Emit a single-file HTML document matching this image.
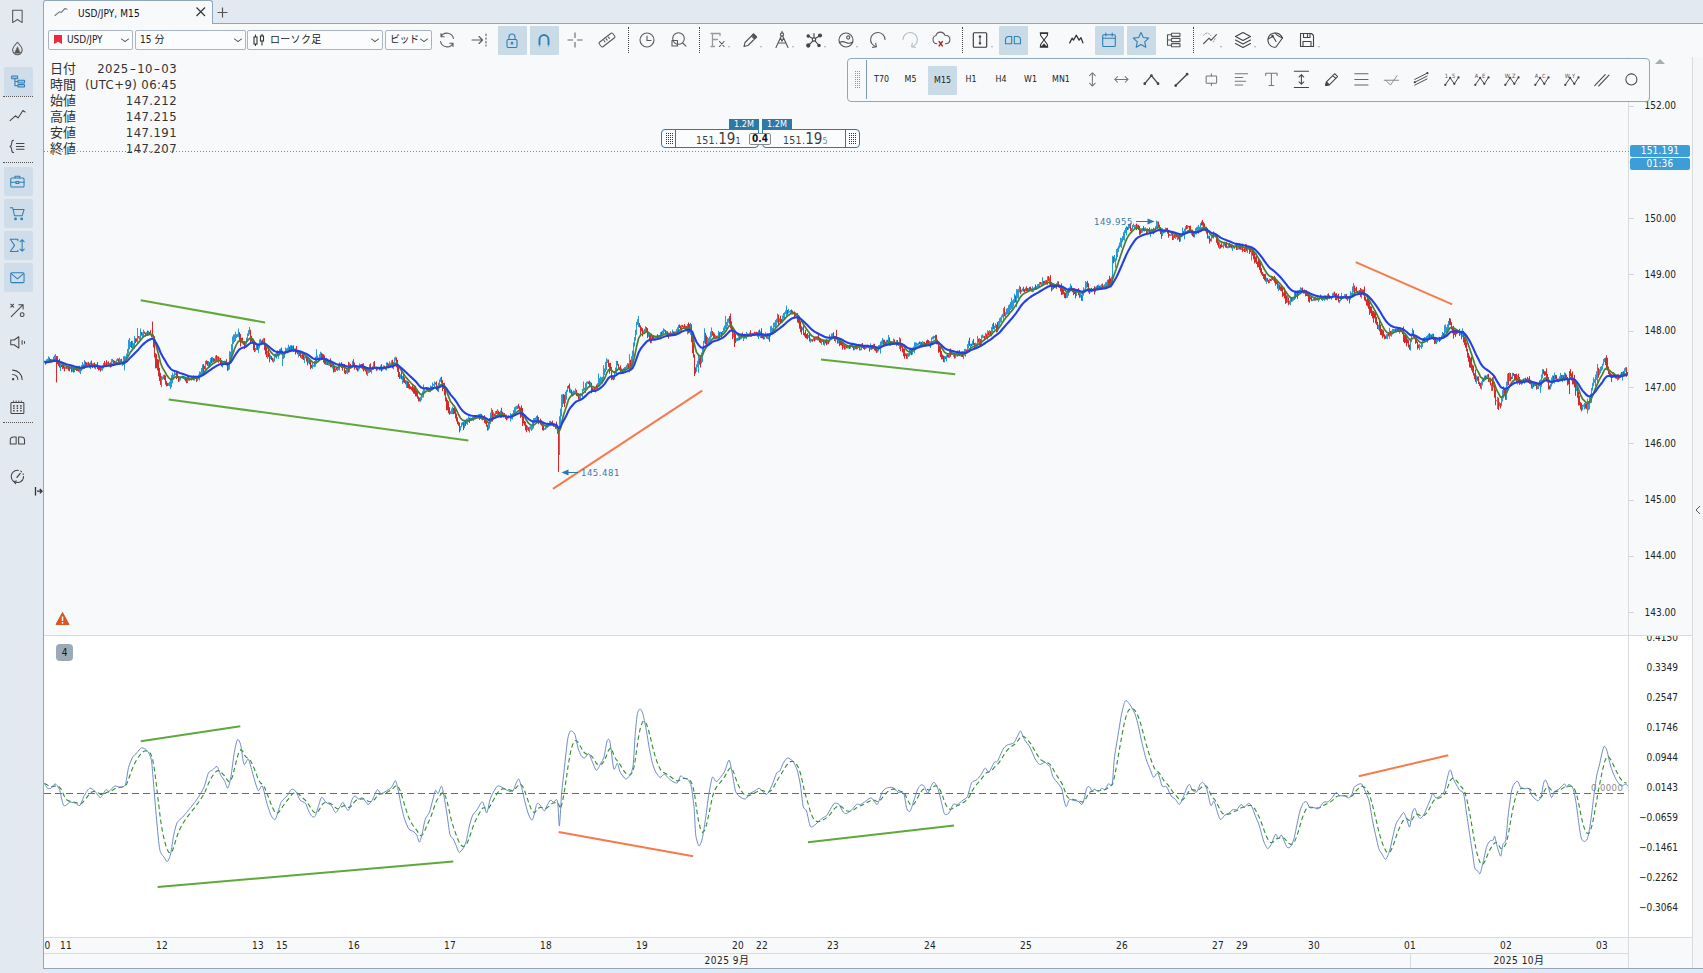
<!DOCTYPE html><html lang="ja"><head><meta charset="utf-8"><title>USD/JPY, M15</title><style>
*{box-sizing:border-box;margin:0;padding:0}
html,body{width:1703px;height:973px;overflow:hidden}
body{position:relative;background:#e3e9f1;font-family:"DejaVu Sans Condensed","Liberation Sans","Noto Sans CJK JP",sans-serif;color:#222;font-size:10px}
.abs{position:absolute}
.panel{position:absolute;left:43px;top:23px;width:1660px;height:946px;background:#f8f9fb;border-left:1px solid #8fa6bb;border-top:1px solid #8fa6bb;border-bottom:1px solid #8fa6bb}
.tab{position:absolute;left:43px;top:0;width:170px;height:25px;background:#f8f9fb;border:1px solid #8fa6bb;border-bottom:none;border-radius:3px 3px 0 0}
.ind{position:absolute;left:44px;top:636px;width:1648px;height:301px;background:#fff}
.hl{position:absolute;height:1px;background:#d9dcdf}
.vl{position:absolute;width:1px;background:#d9dcdf}
.ic{position:absolute;display:block;overflow:visible}
.sb{position:absolute;left:4px;width:29px;height:29px;background:#cedde9;border-radius:2px}
.tb{position:absolute;top:26px;width:29px;height:28.5px;background:#cadbe8;border-radius:1px}
.dsep{position:absolute;left:3px;width:30px;border-top:1px dotted #555}
.vsep{position:absolute;top:27px;height:26px;border-left:1px dotted #444}
.combo{position:absolute;top:30px;height:20px;border:1px solid #a9b4be;border-radius:2px;background:#fbfcfd;font-size:10px;line-height:18px;color:#222}
.combo i{position:absolute;right:4px;top:4.5px;width:6px;height:6px;border-right:1px solid #444;border-bottom:1px solid #444;transform:scaleY(.7) rotate(45deg)}
.ax{position:absolute;left:1644.5px;font-size:10px;letter-spacing:0;color:#222;line-height:12px}
.ax2{position:absolute;right:39px;font-size:10px;letter-spacing:0;color:#222;line-height:12px;text-align:right}
.tk{position:absolute;left:1629px;width:5px;height:1px;background:#d0d4d8}
.dl{position:absolute;top:938.5px;font-size:10px;letter-spacing:.2px;color:#222;line-height:14px;transform:translateX(-50%)}
.info{position:absolute;left:50px;width:127px;font-size:13px;line-height:16px;color:#333;height:16px}
.info b{font-weight:normal;position:absolute;right:0;top:0;letter-spacing:.4px}.info b u{text-decoration:none;display:inline-block;width:8.5px;text-align:center;transform:scaleX(1.5)}
.badge{position:absolute;left:1630px;width:60px;height:12px;background:#3d9dd6;border-radius:2px;color:#fff;font-size:10px;letter-spacing:.2px;line-height:12px;text-align:center;z-index:3}
.ft{position:absolute;left:847px;top:58px;width:803px;height:44px;border:1px solid #8fa6bb;border-radius:4px;background:#f8f9fb}
.ftb{position:absolute;top:73px;font-size:8.8px;letter-spacing:0;color:#222;line-height:12px;transform:translateX(-50%)}
svg.chart{position:absolute;left:0;top:0}
.dd{position:absolute;width:0;height:0;border-left:1.7px solid transparent;border-right:1.7px solid transparent;border-top:2px solid #8fb3cf}
</style></head><body>
<div class="tab"></div>
<div class="panel"></div>
<div class="abs" style="left:44px;top:23px;width:168px;height:2px;background:#f8f9fb"></div>
<svg class="ic" style="left:50px;top:4px" width="22" height="16" viewBox="50 4 22 16" fill="none" stroke="#777" stroke-width="1.1" stroke-linejoin="round" stroke-linecap="round"><path d="M55 15.500L59.400 11.800L61.300 12.400L65 8.500L67 9.300"/></svg>
<div class="abs" style="left:78px;top:7px;font-size:10px;letter-spacing:.1px;line-height:13px;color:#111">USD/JPY, M15</div>
<svg class="ic" style="left:195px;top:6px" width="12" height="12" viewBox="0 0 12 12" stroke="#333" stroke-width="1.200" fill="none"><path d="M1.500 1.500l8.500 8.500M10 1.500l-8.500 8.500"/></svg>
<svg class="ic" style="left:216px;top:6px" width="13" height="13" viewBox="0 0 13 13" stroke="#555" stroke-width="1.200" fill="none"><path d="M6.500 1.500v10M1.500 6.500h10"/></svg>
<div class="sb" style="top:67px"></div>
<div class="sb" style="top:167px"></div>
<div class="sb" style="top:199px"></div>
<div class="sb" style="top:231px"></div>
<div class="sb" style="top:263px"></div>
<div class="dsep" style="top:96px"></div>
<div class="dsep" style="top:162px"></div>
<div class="dsep" style="top:422px"></div>
<svg class="ic" style="left:5.9px;top:5.1px;color:#555;width:22.8px;height:22.8px" width="24" height="24" viewBox="0 0 24 24" fill="none" stroke="currentColor" stroke-width="1.1" stroke-linecap="round" stroke-linejoin="round"><path d="M7 5.5h10v13l-5-3.2-5 3.2z"/></svg>
<svg class="ic" style="left:5.9px;top:37.1px;color:#555;width:22.8px;height:22.8px" width="24" height="24" viewBox="0 0 24 24" fill="none" stroke="currentColor" stroke-width="1.1" stroke-linecap="round" stroke-linejoin="round"><path d="M12 5.5c-2 2.3-5 5-5 8.2a5 5 0 0 0 10 0c0-3.200-3-5.900-5-8.200z"/><path d="M12 10.500l-3 6.500h6z" fill="currentColor" stroke-width=".6"/></svg>
<svg class="ic" style="left:5.9px;top:69.6px;color:#2f7fb5;width:22.8px;height:22.8px" width="24" height="24" viewBox="0 0 24 24" fill="none" stroke="currentColor" stroke-width="1.1" stroke-linecap="round" stroke-linejoin="round"><rect x="5.900" y="6.300" width="6.400" height="2.900" rx=".5" fill="#9cc3de"/><rect x="12.500" y="10.700" width="7" height="3" rx=".5" fill="#9cc3de"/><rect x="12.500" y="15.200" width="7" height="2.800" rx=".5" fill="#9cc3de"/><path d="M9.400 9.200v7.400h3.100M9.400 12.200h3.100"/></svg>
<svg class="ic" style="left:5.9px;top:103.6px;color:#444;width:22.8px;height:22.8px" width="24" height="24" viewBox="0 0 24 24" fill="none" stroke="currentColor" stroke-width="1.1" stroke-linecap="round" stroke-linejoin="round"><path d="M4.300 17.600L9.900 12.400L12.700 14.700L17.800 6.800L20.300 8.500"/></svg>
<svg class="ic" style="left:5.9px;top:134.6px;color:#444;width:22.8px;height:22.8px" width="24" height="24" viewBox="0 0 24 24" fill="none" stroke="currentColor" stroke-width="1.1" stroke-linecap="round" stroke-linejoin="round"><path d="M8 5.500c-2 0-2 1.500-2 3s0 3-1.800 3.500c1.800.5 1.800 2 1.800 3.500s0 3 2 3M11 9h8M11 12h8M11 15h8"/></svg>
<svg class="ic" style="left:5.9px;top:169.6px;color:#2f7fb5;width:22.8px;height:22.8px" width="24" height="24" viewBox="0 0 24 24" fill="none" stroke="currentColor" stroke-width="1.1" stroke-linecap="round" stroke-linejoin="round"><rect x="5" y="8.500" width="14" height="9.500" rx="1.200"/><path d="M9.500 8.500v-2h5v2M5 13h5.500M13.500 13h5.500"/><rect x="10.500" y="12" width="3" height="2.200"/></svg>
<svg class="ic" style="left:5.9px;top:202.1px;color:#2f7fb5;width:22.8px;height:22.8px" width="24" height="24" viewBox="0 0 24 24" fill="none" stroke="currentColor" stroke-width="1.1" stroke-linecap="round" stroke-linejoin="round"><path d="M4.500 6h2.500l2 8.500h8l2-6.500h-11"/><circle cx="10" cy="17.800" r=".9" fill="currentColor"/><circle cx="16.500" cy="17.800" r=".9" fill="currentColor"/></svg>
<svg class="ic" style="left:5.9px;top:234.1px;color:#2f7fb5;width:22.8px;height:22.8px" width="24" height="24" viewBox="0 0 24 24" fill="none" stroke="currentColor" stroke-width="1.1" stroke-linecap="round" stroke-linejoin="round"><path d="M12.500 7v-1.500h-8l4.500 6.500-4.500 6.500h8v-1.500M17 6v12M14.800 8.200l2.200-2.200 2.200 2.200M14.800 15.800l2.200 2.200 2.200-2.200"/></svg>
<svg class="ic" style="left:5.9px;top:265.6px;color:#2f7fb5;width:22.8px;height:22.8px" width="24" height="24" viewBox="0 0 24 24" fill="none" stroke="currentColor" stroke-width="1.1" stroke-linecap="round" stroke-linejoin="round"><rect x="5" y="7" width="14" height="10.500" rx="1.200"/><path d="M5.500 8l6.500 5.500 6.500-5.500"/></svg>
<svg class="ic" style="left:5.9px;top:298.6px;color:#444;width:22.8px;height:22.8px" width="24" height="24" viewBox="0 0 24 24" fill="none" stroke="currentColor" stroke-width="1.1" stroke-linecap="round" stroke-linejoin="round"><path d="M5.500 18.500l12.500-12.500M13.500 6h4.500v4.500M5 5.500l3 3M8 5.500l-3 3"/><circle cx="17" cy="16.500" r="2"/></svg>
<svg class="ic" style="left:5.9px;top:331.1px;color:#444;width:22.8px;height:22.8px" width="24" height="24" viewBox="0 0 24 24" fill="none" stroke="currentColor" stroke-width="1.1" stroke-linecap="round" stroke-linejoin="round"><path d="M5 9.500h3.500l5-3.500v12l-5-3.500h-3.500zM17 10v4M19.500 11.200v1.600"/></svg>
<svg class="ic" style="left:5.9px;top:363.1px;color:#444;width:22.8px;height:22.8px" width="24" height="24" viewBox="0 0 24 24" fill="none" stroke="currentColor" stroke-width="1.1" stroke-linecap="round" stroke-linejoin="round"><path d="M7 7.500a10 10 0 0 1 10 10M7 12a5.500 5.500 0 0 1 5.500 5.500"/><circle cx="7.500" cy="17" r=".7" fill="currentColor"/></svg>
<svg class="ic" style="left:5.9px;top:395.6px;color:#444;width:22.8px;height:22.8px" width="24" height="24" viewBox="0 0 24 24" fill="none" stroke="currentColor" stroke-width="1.1" stroke-linecap="round" stroke-linejoin="round"><rect x="5.200" y="6.800" width="13.600" height="11.700" rx=".8"/><path d="M8 5.200v1.600M10.700 5.200v1.600M13.400 5.200v1.600M16.100 5.200v1.600" stroke-width=".9"/><path d="M8.300 9.600v7M12 9.600v7M15.700 9.600v7" stroke-width="1.500" stroke-dasharray="1.600 1" stroke-linecap="butt"/></svg>
<svg class="ic" style="left:5.9px;top:429.1px;color:#444;width:22.8px;height:22.8px" width="24" height="24" viewBox="0 0 24 24" fill="none" stroke="currentColor" stroke-width="1.1" stroke-linecap="round" stroke-linejoin="round"><path d="M4.500 15.800v-4q0-3.300 3.300-3.300h2.900v7.300zM13.300 8.500h2.900q3.300 0 3.300 3.300v4h-6.200z"/></svg>
<svg class="ic" style="left:5.9px;top:464.6px;color:#444;width:22.8px;height:22.8px" width="24" height="24" viewBox="0 0 24 24" fill="none" stroke="currentColor" stroke-width="1.1" stroke-linecap="round" stroke-linejoin="round"><path d="M12 5.500a6.500 6.500 0 1 0 6.500 6.500"/><path d="M12 5.500a6.500 6.500 0 0 1 6.500 6.500a6.500 6.500 0 0 1 -3 5.500" stroke-dasharray="1.600 1.800" stroke-linecap="butt"/><path d="M11.500 13l3.300-4" stroke-width="1.400"/><path d="M8.300 17.300l1.800 2.500M8.300 17.300l2.800-.5"/></svg>
<svg class="ic" style="left:33px;top:486px" width="10" height="10" viewBox="0 0 10 10" stroke="#333" stroke-width="1.300" fill="none"><path d="M2.500 1v8.500M4 5.200h5M6.800 3l2.200 2.200-2.200 2.200"/></svg>
<div class="combo" style="left:48px;width:85px"><span class="abs" style="left:5px;top:4px;width:8px;height:9px;background:#f0283c;clip-path:polygon(0 0,100% 0,100% 100%,50% 75%,0 100%)"></span><span class="abs" style="left:18px;top:0;letter-spacing:0">USD/JPY</span><i></i></div>
<div class="combo" style="left:135px;width:111px"><span class="abs" style="left:4px;top:0;letter-spacing:.1px">15 分</span><i></i></div>
<div class="combo" style="left:247px;width:136px"><svg class="ic" style="left:4px;top:2px" width="14" height="14" viewBox="0 0 14 14" fill="none" stroke="#333" stroke-width="1.100"><rect x="2" y="4" width="3" height="7"/><path d="M3.500 1.500v2.500M3.500 11v2"/><rect x="8.500" y="3" width="3" height="5"/><path d="M10 1v2M10 8v4.500"/></svg><span class="abs" style="left:22px;top:0;letter-spacing:.3px">ローソク足</span><i></i></div>
<div class="combo" style="left:385px;width:47px"><span class="abs" style="left:4px;top:0;letter-spacing:-.4px">ビッド</span><i></i></div>
<div class="tb" style="left:498px"></div>
<div class="tb" style="left:530px"></div>
<div class="tb" style="left:999px"></div>
<div class="tb" style="left:1095px"></div>
<div class="tb" style="left:1127px"></div>
<div class="vsep" style="left:628px"></div>
<div class="vsep" style="left:699px"></div>
<div class="vsep" style="left:962px"></div>
<div class="vsep" style="left:1193px"></div>
<svg class="ic" style="left:435.0px;top:28.0px;color:#5a5a5a;width:24.0px;height:24.0px" width="24" height="24" viewBox="0 0 24 24" fill="none" stroke="currentColor" stroke-width="1.1" stroke-linecap="round" stroke-linejoin="round"><path d="M18.500 10.500a6.800 6.800 0 0 0-12.500-2M5.500 13.500a6.800 6.800 0 0 0 12.500 2M6 5.500v3.200h3.200M18 18.500v-3.200h-3.200"/></svg>
<svg class="ic" style="left:467.0px;top:28.0px;color:#5a5a5a;width:24.0px;height:24.0px" width="24" height="24" viewBox="0 0 24 24" fill="none" stroke="currentColor" stroke-width="1.1" stroke-linecap="round" stroke-linejoin="round"><path d="M5 12h10.500M12 8.500l3.500 3.500-3.500 3.500"/><path d="M19 6v12" stroke-dasharray="1.500 2.200"/></svg>
<svg class="ic" style="left:500.0px;top:28.0px;color:#2f7fb5;width:24.0px;height:24.0px" width="24" height="24" viewBox="0 0 24 24" fill="none" stroke="currentColor" stroke-width="1.1" stroke-linecap="round" stroke-linejoin="round"><rect x="7" y="11.500" width="10" height="8" rx="1.200"/><path d="M9 11.500v-2.500a3 3 0 0 1 6 0v2.500"/><circle cx="12" cy="15.300" r=".9"/></svg>
<svg class="ic" style="left:532.0px;top:28.0px;color:#2f7fb5;width:24.0px;height:24.0px" width="24" height="24" viewBox="0 0 24 24" fill="none" stroke="currentColor" stroke-width="1.1" stroke-linecap="round" stroke-linejoin="round"><path d="M7.500 17v-5.500a4.500 4.500 0 0 1 9 0v5.500" stroke-width="1.900" stroke-linecap="butt"/><path d="M7.500 17.500v2M16.500 17.500v2" stroke-dasharray="1 1" stroke-linecap="butt"/></svg>
<svg class="ic" style="left:563.0px;top:28.0px;color:#5a5a5a;width:24.0px;height:24.0px" width="24" height="24" viewBox="0 0 24 24" fill="none" stroke="currentColor" stroke-width="1.1" stroke-linecap="round" stroke-linejoin="round"><path d="M12 4.500v5.500M12 14v5.500M4.500 12h5.500M14 12h5.500" stroke="#9a9a9a" stroke-width="1.700" stroke-linecap="butt"/></svg>
<svg class="ic" style="left:595.0px;top:28.0px;color:#5a5a5a;width:24.0px;height:24.0px" width="24" height="24" viewBox="0 0 24 24" fill="none" stroke="currentColor" stroke-width="1.1" stroke-linecap="round" stroke-linejoin="round"><rect x="3.500" y="9.200" width="17" height="5.600" rx="1.200" transform="rotate(-38 12 12)"/><path d="M9 12.500l1 1.300M11.200 10.800l1 1.300M13.400 9.100l1 1.300" /></svg>
<svg class="ic" style="left:634.5px;top:28.0px;color:#5a5a5a;width:24.0px;height:24.0px" width="24" height="24" viewBox="0 0 24 24" fill="none" stroke="currentColor" stroke-width="1.1" stroke-linecap="round" stroke-linejoin="round"><circle cx="12" cy="12" r="7"/><path d="M12 8v4.500h4"/></svg>
<svg class="ic" style="left:666.0px;top:28.0px;color:#5a5a5a;width:24.0px;height:24.0px" width="24" height="24" viewBox="0 0 24 24" fill="none" stroke="currentColor" stroke-width="1.1" stroke-linecap="round" stroke-linejoin="round"><circle cx="12.500" cy="10.500" r="5.800"/><path d="M16.800 15l3.200 3.200M6 12.500h5.500v5.500h-5.500z"/></svg>
<svg class="ic" style="left:705.5px;top:28.0px;color:#777;width:24.0px;height:24.0px" width="24" height="24" viewBox="0 0 24 24" fill="none" stroke="currentColor" stroke-width="1.1" stroke-linecap="round" stroke-linejoin="round"><path d="M6.500 18.500v-13h7.500v2M6.500 11.500h5M5 18.500h3.500M5 5.500h2" stroke="#9a9a9a" stroke-width="1.300"/><path d="M13.500 13.500l4.500 5M18 13.500l-4.500 5" stroke="#555"/></svg>
<div class="dd" style="left:728.1px;top:45.5px"></div>
<svg class="ic" style="left:737.5px;top:28.0px;color:#555;width:24.0px;height:24.0px" width="24" height="24" viewBox="0 0 24 24" fill="none" stroke="currentColor" stroke-width="1.1" stroke-linecap="round" stroke-linejoin="round"><path d="M6 18.500l1-4 8.500-8.500 3 3-8.500 8.500zM13.500 8l3 3"/><path d="M14.200 7.300l1.300-1.300 3 3-1.300 1.300z" fill="currentColor"/></svg>
<div class="dd" style="left:760.1px;top:45.5px"></div>
<svg class="ic" style="left:769.5px;top:28.0px;color:#555;width:24.0px;height:24.0px" width="24" height="24" viewBox="0 0 24 24" fill="none" stroke="currentColor" stroke-width="1.1" stroke-linecap="round" stroke-linejoin="round"><circle cx="12" cy="6.500" r="1.600"/><path d="M11.300 8l-5.300 11.500M12.700 8l5.300 11.500M8.200 15h7.600M12 3.300v1.600M10.400 9.800l1.600 3.400 1.600-3.400"/></svg>
<div class="dd" style="left:792.1px;top:45.5px"></div>
<svg class="ic" style="left:801.5px;top:28.0px;color:#444;width:24.0px;height:24.0px" width="24" height="24" viewBox="0 0 24 24" fill="none" stroke="currentColor" stroke-width="1.1" stroke-linecap="round" stroke-linejoin="round"><circle cx="12" cy="11.500" r="1.700"/><path d="M12 9.800v-4.300M10.700 10.500l-4-2.300M13.300 10.500l4-2.500M10.900 12.800l-4 4.200M13.100 12.800l3.500 4.200"/><circle cx="6.200" cy="8" r="1.200" fill="currentColor"/><circle cx="18" cy="7.500" r="1.500" fill="currentColor"/><circle cx="6.300" cy="17.500" r="1.600" fill="currentColor"/><circle cx="17" cy="17.500" r="1.200" fill="currentColor"/></svg>
<div class="dd" style="left:824.1px;top:45.5px"></div>
<svg class="ic" style="left:833.5px;top:28.0px;color:#555;width:24.0px;height:24.0px" width="24" height="24" viewBox="0 0 24 24" fill="none" stroke="currentColor" stroke-width="1.1" stroke-linecap="round" stroke-linejoin="round"><circle cx="12" cy="12" r="7"/><circle cx="14.200" cy="9.500" r="1.600"/><path d="M5.300 14.600c2.500-1.600 4.500-1.200 6.500-.2s4.500 1.200 7-.4"/></svg>
<div class="dd" style="left:856.1px;top:45.5px"></div>
<svg class="ic" style="left:865.5px;top:28.0px;color:#5a5a5a;width:24.0px;height:24.0px" width="24" height="24" viewBox="0 0 24 24" fill="none" stroke="currentColor" stroke-width="1.1" stroke-linecap="round" stroke-linejoin="round"><path d="M19 11.500A7.200 7.200 0 1 0 10.300 18.700"/><path d="M6.600 19.400l3.700-.7-.6-3.500"/></svg>
<svg class="ic" style="left:897.5px;top:28.0px;color:#b3bec4;width:24.0px;height:24.0px" width="24" height="24" viewBox="0 0 24 24" fill="none" stroke="currentColor" stroke-width="1.1" stroke-linecap="round" stroke-linejoin="round"><path d="M5 11.500A7.200 7.200 0 1 1 13.700 18.700"/><path d="M17.400 19.400l-3.700-.7.600-3.500"/></svg>
<svg class="ic" style="left:929.0px;top:28.0px;color:#5a5a5a;width:24.0px;height:24.0px" width="24" height="24" viewBox="0 0 24 24" fill="none" stroke="currentColor" stroke-width="1.1" stroke-linecap="round" stroke-linejoin="round"><path d="M8 15.800C5.500 15.800 4 14 4 11.800C4 9.500 5.500 8 6.800 7.800C7.500 5.500 9.300 4.100 11.500 4.100C13.500 4.100 15.200 5.300 16 7.300C18.800 7.300 20.900 9 20.900 11.600C20.900 14 19 15.800 16.400 15.800"/><path d="M10 13.500l3.400 4.500M13.400 13.500l-3.400 4.500" stroke="#b02020" stroke-width="1.250"/></svg>
<svg class="ic" style="left:968.0px;top:28.0px;color:#333;width:24.0px;height:24.0px" width="24" height="24" viewBox="0 0 24 24" fill="none" stroke="currentColor" stroke-width="1.1" stroke-linecap="round" stroke-linejoin="round"><rect x="5.300" y="4.800" width="13.400" height="14.400" rx="1"/><path d="M12 8.500v7" stroke-width=".9"/><path d="M12 7.300l1 1.300-1 1.300-1-1.300zM12 14.100l1 1.300-1 1.300-1-1.300z" fill="currentColor" stroke-width=".4"/></svg>
<div class="dd" style="left:990.6px;top:45.5px"></div>
<svg class="ic" style="left:1001.0px;top:28.0px;color:#2f7fb5;width:24.0px;height:24.0px" width="24" height="24" viewBox="0 0 24 24" fill="none" stroke="currentColor" stroke-width="1.1" stroke-linecap="round" stroke-linejoin="round"><path d="M4.500 15.800v-4q0-3.300 3.300-3.300h2.900v7.300zM13.300 8.500h2.900q3.300 0 3.300 3.300v4h-6.200z"/></svg>
<svg class="ic" style="left:1031.5px;top:28.0px;color:#333;width:24.0px;height:24.0px" width="24" height="24" viewBox="0 0 24 24" fill="none" stroke="currentColor" stroke-width="1.1" stroke-linecap="round" stroke-linejoin="round"><path d="M7.800 5.200h8.400M7.800 18.800h8.400" stroke-width="1.700" stroke-linecap="butt"/><path d="M8.600 5.500v2l3.400 4.500 3.400-4.500v-2M8.600 18.500v-2l3.400-4.500 3.400 4.500v2"/><path d="M9.500 18.300l2.500-2.600 2.500 2.600z" fill="currentColor" stroke-width=".5"/></svg>
<svg class="ic" style="left:1064.0px;top:28.0px;color:#333;width:24.0px;height:24.0px" width="24" height="24" viewBox="0 0 24 24" fill="none" stroke="currentColor" stroke-width="1.1" stroke-linecap="round" stroke-linejoin="round"><path d="M5.700 14.900L8.100 10.200L9.500 12.100L12.300 7.200L15.100 12.100L17 9.700L18.900 14.900" stroke-width="1.300"/></svg>
<svg class="ic" style="left:1097.0px;top:28.0px;color:#2f7fb5;width:24.0px;height:24.0px" width="24" height="24" viewBox="0 0 24 24" fill="none" stroke="currentColor" stroke-width="1.1" stroke-linecap="round" stroke-linejoin="round"><rect x="5.700" y="6.800" width="12.600" height="11.700" rx="1"/><path d="M5.700 10.300h12.600M8.800 5v3M15.200 5v3"/></svg>
<svg class="ic" style="left:1129.0px;top:28.0px;color:#2f7fb5;width:24.0px;height:24.0px" width="24" height="24" viewBox="0 0 24 24" fill="none" stroke="currentColor" stroke-width="1.1" stroke-linecap="round" stroke-linejoin="round"><path d="M12 4.500l2.300 5 5.400.6-4 3.700 1.100 5.400-4.800-2.800-4.800 2.800 1.100-5.400-4-3.700 5.400-.6z"/></svg>
<svg class="ic" style="left:1161.5px;top:28.0px;color:#555;width:24.0px;height:24.0px" width="24" height="24" viewBox="0 0 24 24" fill="none" stroke="currentColor" stroke-width="1.1" stroke-linecap="round" stroke-linejoin="round"><rect x="9.500" y="5.200" width="8.500" height="3.200" rx=".4"/><rect x="9.500" y="10.400" width="8.500" height="3.200" rx=".4"/><rect x="9.500" y="15.600" width="8.500" height="3.200" rx=".4"/><path d="M9.500 6.800h-4v10.400h4M5.500 12h4"/></svg>
<svg class="ic" style="left:1197.5px;top:28.0px;color:#555;width:24.0px;height:24.0px" width="24" height="24" viewBox="0 0 24 24" fill="none" stroke="currentColor" stroke-width="1.1" stroke-linecap="round" stroke-linejoin="round"><path d="M5.700 15.500L11.100 10.100L13 12.300L18.400 6.700" stroke-width="1.200"/><path d="M5.700 7.300Q8.700 2.500 13.600 8.300M15.400 14L17.600 9.500" stroke="#999" stroke-dasharray="1.300 1.300" stroke-width=".9"/></svg>
<div class="dd" style="left:1220.1px;top:45.5px"></div>
<svg class="ic" style="left:1231.0px;top:28.0px;color:#444;width:24.0px;height:24.0px" width="24" height="24" viewBox="0 0 24 24" fill="none" stroke="currentColor" stroke-width="1.1" stroke-linecap="round" stroke-linejoin="round"><path d="M12 4.500l7.500 4-7.500 4-7.500-4zM4.500 12l7.500 4 7.500-4M4.500 15.500l7.500 4 7.500-4"/></svg>
<div class="dd" style="left:1253.6px;top:45.5px"></div>
<svg class="ic" style="left:1263.0px;top:28.0px;color:#444;width:24.0px;height:24.0px" width="24" height="24" viewBox="0 0 24 24" fill="none" stroke="currentColor" stroke-width="1.1" stroke-linecap="round" stroke-linejoin="round"><path d="M5 13a7 7 0 0 1 7-8c3 0 6 1.500 7.500 5l-6.500 9c-4 1-7.500-2-8-6z"/><path d="M12 5c2 3 5 4 7.500 5M5 11l5-2.500 3 5"/><circle cx="9.500" cy="8" r=".7" fill="currentColor"/></svg>
<svg class="ic" style="left:1295.0px;top:28.0px;color:#444;width:24.0px;height:24.0px" width="24" height="24" viewBox="0 0 24 24" fill="none" stroke="currentColor" stroke-width="1.1" stroke-linecap="round" stroke-linejoin="round"><path d="M5.500 5.500h11l2 2v11h-13z"/><rect x="8.500" y="5.500" width="6.500" height="4"/><rect x="8" y="13.500" width="8" height="5"/><path d="M12.500 6.500v2" /></svg>
<div class="dd" style="left:1317.6px;top:45.5px"></div>
<div class="info" style="top:60.5px">日付<b>2025<u>-</u>10<u>-</u>03</b></div>
<div class="info" style="top:76.5px">時間<b>(UTC+9) 06:45</b></div>
<div class="info" style="top:92.5px">始値<b>147.212</b></div>
<div class="info" style="top:108.5px">高値<b>147.215</b></div>
<div class="info" style="top:124.5px">安値<b>147.191</b></div>
<div class="info" style="top:140.5px">終値<b>147.207</b></div>
<div class="ind"></div>
<div class="abs" style="left:44px;top:938px;width:1648px;height:30px;background:#f8f9fb"></div>
<div class="hl" style="left:44px;top:635px;width:1648px"></div>
<div class="hl" style="left:44px;top:937px;width:1648px"></div>
<div class="hl" style="left:44px;top:953px;width:1585px"></div>
<div class="vl" style="left:1628px;top:57px;height:911px"></div>
<div class="vl" style="left:1692px;top:57px;height:911px"></div>
<div class="vl" style="left:1410px;top:954px;height:14px"></div>
<div class="abs" style="left:1693px;top:57px;width:10px;height:911px;background:#f5f6f8"></div>
<svg class="ic" style="left:1694px;top:505px" width="8" height="10" viewBox="0 0 8 10" stroke="#555" stroke-width="1" fill="none"><path d="M6 1l-4 4 4 4"/></svg>
<div class="abs" style="left:1655px;top:59px;width:0;height:0;border-left:5px solid transparent;border-right:5px solid transparent;border-bottom:5px solid #a3aeb0"></div>
<div class="abs" style="left:44px;top:151px;width:1585px;height:1px;background:repeating-linear-gradient(90deg,#45a0d8 0,#45a0d8 1px,transparent 1px,transparent 3px)"></div>
<div class="badge" style="top:145px">151.191</div><div class="badge" style="top:158px">01:36</div>
<div class="tk" style="top:106px"></div>
<div class="ax" style="top:100.2px">152.00</div>
<div class="tk" style="top:162px"></div>
<div class="tk" style="top:218px"></div>
<div class="ax" style="top:212.8px">150.00</div>
<div class="tk" style="top:274px"></div>
<div class="ax" style="top:269.0px">149.00</div>
<div class="tk" style="top:331px"></div>
<div class="ax" style="top:325.2px">148.00</div>
<div class="tk" style="top:387px"></div>
<div class="ax" style="top:381.5px">147.00</div>
<div class="tk" style="top:443px"></div>
<div class="ax" style="top:437.8px">146.00</div>
<div class="tk" style="top:500px"></div>
<div class="ax" style="top:494.0px">145.00</div>
<div class="tk" style="top:556px"></div>
<div class="ax" style="top:550.2px">144.00</div>
<div class="tk" style="top:612px"></div>
<div class="ax" style="top:606.5px">143.00</div>
<div class="abs" style="left:1629px;top:636px;width:63px;height:301px;overflow:hidden">
<div class="ax2" style="right:14px;top:-4.5px">0.4150</div>
<div class="ax2" style="right:14px;top:25.5px">0.3349</div>
<div class="ax2" style="right:14px;top:55.6px">0.2547</div>
<div class="ax2" style="right:14px;top:85.6px">0.1746</div>
<div class="ax2" style="right:14px;top:115.7px">0.0944</div>
<div class="ax2" style="right:14px;top:145.8px">0.0143</div>
<div class="ax2" style="right:14px;top:175.8px">−0.0659</div>
<div class="ax2" style="right:14px;top:205.9px">−0.1461</div>
<div class="ax2" style="right:14px;top:235.9px">−0.2262</div>
<div class="ax2" style="right:14px;top:266.0px">−0.3064</div>
</div>
<div class="abs" style="left:1591px;top:782px;font-size:9.500px;letter-spacing:.4px;line-height:12px;color:#8a8a8a">0.0000</div>
<div class="dl" style="left:47.500px">0</div>
<div class="dl" style="left:66px">11</div>
<div class="dl" style="left:162px">12</div>
<div class="dl" style="left:258px">13</div>
<div class="dl" style="left:282px">15</div>
<div class="dl" style="left:354px">16</div>
<div class="dl" style="left:450px">17</div>
<div class="dl" style="left:546px">18</div>
<div class="dl" style="left:642px">19</div>
<div class="dl" style="left:738px">20</div>
<div class="dl" style="left:762px">22</div>
<div class="dl" style="left:833px">23</div>
<div class="dl" style="left:930px">24</div>
<div class="dl" style="left:1026px">25</div>
<div class="dl" style="left:1122px">26</div>
<div class="dl" style="left:1218px">27</div>
<div class="dl" style="left:1242px">29</div>
<div class="dl" style="left:1314px">30</div>
<div class="dl" style="left:1410px">01</div>
<div class="dl" style="left:1506px">02</div>
<div class="dl" style="left:1602px">03</div>
<div class="dl" style="left:727px;top:953.5px;letter-spacing:.5px">2025 9月</div>
<div class="dl" style="left:1519px;top:953.5px;letter-spacing:.5px">2025 10月</div>
<svg class="chart" width="1703" height="973" viewBox="0 0 1703 973">
<defs><clipPath id="cm"><rect x="44" y="57" width="1584" height="578"/></clipPath><clipPath id="ci"><rect x="44" y="636" width="1584" height="301"/></clipPath></defs>
<g clip-path="url(#cm)" fill="none">
<path d="M44.5 360.7V362.5M46.5 359.3V363.7M47.5 358.8V361.9M48.5 356.3V363.2M51.5 358.9V362.6M53.5 356.7V360.8M54.5 355.2V362.1M55.5 354V361M60.5 364V371M65.5 367.1V368.7M67.5 366.4V369.2M70.5 366.8V369.2M72.5 367.3V371.8M74.5 367V372.3M79.5 365.7V372.7M80.5 367.1V374.1M81.5 365.1V371.2M82.5 362.2V367.8M84.5 360V368.9M87.5 362.5V366.5M90.5 361.7V369.2M93.5 363V366.1M95.5 363.9V369.3M96.5 363.9V366.7M101.5 366.2V370.5M102.5 365.8V370.6M103.5 362.9V368.5M105.5 362.7V366.5M107.5 361.9V365.6M109.5 363V365.3M111.5 359.1V367.1M112.5 358.9V362.4M115.5 361V365.2M116.5 359.4V363.9M117.5 358.1V361.1M119.5 357.5V363.7M120.5 359.1V363M122.5 361.8V365.9M123.5 356.3V365M124.5 355.8V370.3M125.5 356.4V361.6M126.5 353.7V359.6M127.5 349V356M128.5 339.8V353.5M129.5 338V349.5M130.5 342V347M132.5 340.9V350.3M133.5 343.1V348.4M134.5 335.9V348.6M137.5 328V343M139.5 336.3V339.7M140.5 328.5V340.1M142.5 332.3V337.7M143.5 329.6V337.3M146.5 332.1V334.9M148.5 330.8V335.7M161.5 376V387.3M162.5 376.4V379.8M163.5 374.8V379.2M168.5 382.9V385.8M169.5 381.8V386.3M170.5 379.2V388.9M171.5 375.2V387.3M172.5 372.7V383.4M173.5 374.7V379.7M174.5 372V376.6M175.5 373.1V375.2M179.5 377.8V381.5M180.5 376.6V380.4M181.5 376V377.8M182.5 375.6V378.3M184.5 376.6V380.1M187.5 376.1V383M190.5 378.1V380.2M191.5 376.7V380.7M192.5 376.8V380M194.5 376.5V380.6M195.5 375.9V378.8M197.5 376.4V380.8M198.5 374.6V379.5M199.5 371.4V380.5M200.5 371.8V375.2M201.5 367.9V375M202.5 364.5V373.4M205.5 360.8V370.4M208.5 361.1V367.1M210.5 358.2V366.8M212.5 356.8V362.6M215.5 355.7V361.5M217.5 356.1V361.3M219.5 357.6V359.8M222.5 360.7V367.4M223.5 362V364.8M224.5 360.6V364.7M228.5 363V370.2M229.5 351.2V369.6M230.5 351.7V361.9M231.5 344.2V357.7M232.5 336.6V352.8M233.5 334.5V343.9M234.5 334.3V342.1M235.5 331.8V340.9M236.5 334.2V338.1M237.5 333.9V336.9M238.5 328.5V337.3M245.5 341.7V347.5M246.5 337.7V344.7M247.5 333.4V341.2M248.5 330.2V336M249.5 327V334.6M255.5 348V351.5M256.5 344.6V350.1M258.5 344V352.8M259.5 339.6V348.4M260.5 338.9V343.5M263.5 338.1V343.9M267.5 350.7V358.9M270.5 354.9V359.1M273.5 358.4V362.7M274.5 353.9V361.4M276.5 351.8V358.7M278.5 351.5V358.8M279.5 349.1V355.4M280.5 348.6V351.2M282.5 350.6V366M283.5 354.3V359.1M284.5 351.2V357.9M285.5 347.6V353.5M286.5 348.4V353M287.5 347.7V353.3M288.5 344.7V352.7M290.5 345.3V351.8M292.5 345.7V349.9M294.5 348.6V351.6M298.5 351.5V357.3M301.5 354.8V358.7M304.5 356.3V363.1M305.5 354.5V358.3M308.5 359.2V363.3M312.5 363.1V368.8M313.5 364.7V366.6M314.5 361V367.2M315.5 356.7V366.5M316.5 349.2V364M317.5 355.6V360.1M319.5 354.3V360.9M320.5 351.7V358.9M326.5 357.8V365.2M328.5 359.9V365.6M329.5 361.5V365.8M332.5 363V368.6M335.5 368.3V372M337.5 367.3V371M338.5 364.9V370.2M339.5 362.3V370.5M343.5 364.1V367.9M346.5 369.2V373.5M347.5 368.8V374.2M349.5 362.6V372.2M352.5 360.9V367.6M355.5 365.6V368M358.5 366.1V371.2M359.5 363.4V369.4M360.5 364.2V367.5M367.5 370V376.1M368.5 368.4V373.3M369.5 364.4V372.7M371.5 368.1V373.5M372.5 366.4V370.2M373.5 362V369.9M377.5 367.2V370.3M378.5 367.7V369.4M380.5 365.5V370.4M382.5 366.7V370.6M383.5 365.3V369.6M386.5 362.3V370.5M389.5 361.3V366.8M390.5 362.9V366.2M391.5 360.4V366.6M393.5 361.8V369.4M394.5 357.6V363.8M395.5 356.6V360.7M400.5 374.4V378.7M402.5 375.9V383.8M406.5 380.4V387.8M420.5 396.7V401.9M421.5 393.8V400.3M422.5 391.3V397.6M423.5 384.5V397.5M424.5 388V393.3M425.5 387.1V389.5M429.5 388.7V392.2M430.5 385.5V392.1M432.5 382.5V388.9M434.5 381.4V388M438.5 382.8V392.2M439.5 379.5V387.6M440.5 377.5V381.8M450.5 411.2V414M451.5 408.5V414.2M452.5 406.7V414.1M460.5 426.1V430.5M461.5 422.7V427.3M462.5 422V425.3M464.5 419.8V428.2M466.5 418.6V424M467.5 418.5V424.8M468.5 416.3V421.9M470.5 417.5V420.8M472.5 416.9V420.3M473.5 416V421M475.5 416.4V419.3M476.5 416.3V418.4M477.5 416.5V417.8M478.5 414.1V417.8M480.5 413.7V418.9M483.5 417.8V419.9M488.5 422.2V430.2M489.5 418V428.6M490.5 412.6V424.1M491.5 408.1V421.9M493.5 412.3V419.8M495.5 411.2V416.1M497.5 409.2V414.6M500.5 410.5V417.9M503.5 412.7V417.4M507.5 416.2V419.5M509.5 416.3V418.2M510.5 413.1V421.4M511.5 414V419.3M512.5 413.4V419.3M513.5 410V415.4M514.5 407.2V415.7M515.5 406.5V412.4M516.5 405.8V409.5M517.5 405.4V409.2M527.5 425.7V429.9M529.5 426.7V432.6M530.5 426.2V429.6M531.5 425.4V431M532.5 421.7V429.5M533.5 418.1V428.4M534.5 418V422.6M535.5 417.6V421.9M536.5 415.9V420.9M539.5 420.6V423M544.5 428.1V429.8M545.5 426V429.8M546.5 423.3V428.6M547.5 422.6V427.9M548.5 424.7V426.8M549.5 421.1V425.9M550.5 420.8V425.3M559.5 416.3V455M560.5 408.6V424.5M561.5 394.5V416.4M562.5 394.4V407M565.5 391.7V403.1M566.5 390V399.7M567.5 386V391.9M570.5 388.5V393.3M572.5 391.5V396.5M573.5 390.5V395.6M574.5 390.7V393.3M575.5 388.3V393.9M579.5 393.8V400.4M580.5 393.1V399.5M582.5 389V397.1M583.5 381.5V391M584.5 387.6V390M585.5 383.1V393.1M586.5 381.7V387.8M587.5 381.3V383.6M590.5 382V385.6M593.5 388.2V391.2M595.5 386.4V392.5M597.5 383.2V389.3M598.5 373.5V386.9M599.5 378.1V384.5M600.5 376.6V383.4M601.5 377.3V383.2M602.5 376.7V383.6M603.5 365.1V379.6M604.5 368.5V375M605.5 361.9V372.3M606.5 358.2V370M607.5 359.4V363M614.5 370.9V379.5M615.5 367.6V373.8M616.5 360.8V374M621.5 368.2V373.3M623.5 368.1V373.2M624.5 367.1V371.2M625.5 366.7V371.4M626.5 365.1V368.8M627.5 363V369.1M629.5 354.2V372.4M631.5 356.3V367.9M632.5 350.6V365.5M633.5 342.4V357M634.5 337.1V346.5M635.5 329.9V340.6M636.5 321.9V334.8M637.5 319.2V324.9M638.5 316V326.8M643.5 330.3V333.3M644.5 328.9V334.1M645.5 326.2V332.9M648.5 332.1V336.9M651.5 333.5V343.1M654.5 337.4V338.9M655.5 335.7V339.5M656.5 335.7V338.5M658.5 335.2V338.1M660.5 332.2V337.6M662.5 330.4V333.9M663.5 328.3V334M664.5 329.2V331.9M666.5 331V335.4M669.5 333.1V335.3M671.5 333.2V335.2M672.5 329.6V334.6M675.5 331.4V335.4M676.5 329.1V332.6M677.5 327.2V332.3M678.5 325V331.1M681.5 324.8V331.8M683.5 325.6V327.9M685.5 325.6V329.9M687.5 324.1V334.4M690.5 322.9V334.9M696.5 364.3V371.9M697.5 360.7V367.4M698.5 354.8V372.8M701.5 352.5V363.6M702.5 347.9V362.2M703.5 340.9V352.1M704.5 328.2V343.3M707.5 337V346M708.5 338.1V346.2M709.5 336.6V341.8M710.5 331.5V339.8M711.5 327.5V337.2M715.5 335.1V339.4M717.5 335.6V338.6M718.5 330.7V340.7M720.5 331.8V334.7M722.5 331V334.5M723.5 327.5V332.4M724.5 325.6V331.5M725.5 315.9V329.3M726.5 322V331.5M727.5 319V326M728.5 318.2V322.6M733.5 331.8V337.4M736.5 338.1V341.4M738.5 336.5V340.6M740.5 335.8V339.5M741.5 333.5V339.1M743.5 334.8V341.2M744.5 333.6V338.9M746.5 331.8V339.2M747.5 333.3V336.8M749.5 332.6V336.3M753.5 332.8V336M755.5 331.8V334.3M758.5 330.5V339M760.5 331.3V338M764.5 335.6V339.3M765.5 332.3V337.2M767.5 333.1V339M768.5 333.1V339.6M770.5 326.2V336.5M771.5 325.8V332.2M772.5 327.9V331.7M773.5 322.8V330.8M774.5 322.4V327.4M775.5 320.1V328.4M776.5 318.7V325.8M777.5 313.6V322.6M779.5 318.4V322.3M782.5 315.4V322.6M783.5 313V318.7M784.5 312.2V318.2M785.5 310.4V314.3M786.5 305.6V316.2M788.5 308.8V313.3M789.5 311V312.7M790.5 310V313.2M796.5 313.8V318.1M802.5 327.4V330.4M808.5 334.8V337.8M810.5 338.3V342.6M811.5 339V341.4M813.5 337.8V340.8M815.5 336.4V340.5M817.5 335.8V340.5M821.5 339.4V344.8M824.5 340.3V345.7M827.5 339.7V344.2M829.5 334.5V342.4M830.5 336.5V340M831.5 333.5V338.7M832.5 333.4V337.2M835.5 335.9V342.5M838.5 339.4V343.4M843.5 343.7V348M845.5 345.3V349.4M847.5 345.7V348.5M848.5 346.1V348.5M850.5 344.8V348.6M851.5 343.9V347.1M854.5 345.5V350.2M857.5 344.5V349.3M858.5 343.9V348M860.5 348.6V350.5M861.5 343.7V350.2M865.5 347V349.1M866.5 345.8V348.6M867.5 344.7V347.5M870.5 343.4V349.6M873.5 343.8V349.2M877.5 348V352.6M878.5 345.1V351.3M879.5 344.7V349.2M880.5 341.6V353.6M881.5 340.7V345.2M882.5 337.8V344.2M886.5 339.8V344.2M888.5 335V343.7M890.5 340.8V345.9M893.5 338.4V343.9M895.5 341.9V344.3M896.5 340.2V346.3M899.5 337V349M907.5 353V359.1M908.5 353.2V356.8M909.5 349V356.2M910.5 347.7V354.7M912.5 347.5V354.6M913.5 346.5V351.4M914.5 342.3V353.1M915.5 342.3V349.6M916.5 342.6V346.9M917.5 343.4V345.8M918.5 342.6V345.4M920.5 341.7V345.2M922.5 341.2V345.3M923.5 341.7V344.5M925.5 342.9V346.9M929.5 341V346.5M930.5 341.3V348M931.5 337.4V343.9M932.5 336.6V339.5M933.5 335.7V339.3M934.5 336V338.1M944.5 355.9V362.4M946.5 354.7V361.4M949.5 349.8V357.9M952.5 352V354.9M953.5 352.3V356.6M955.5 353.3V358.3M956.5 351V356.3M958.5 351.4V356.2M960.5 352.8V356.4M963.5 351.3V359M964.5 349V355.8M965.5 348.9V356.7M967.5 344.1V353M968.5 340.7V348.5M970.5 343.8V348.6M972.5 340.6V345.5M975.5 342.7V348.2M976.5 343.3V348.4M977.5 335.9V346.3M979.5 338.1V345.7M981.5 335.2V346.1M982.5 334.5V338.2M983.5 335.6V338.1M985.5 332.7V339M987.5 330.2V339.6M989.5 330.1V335.2M991.5 327.1V336.3M992.5 323.9V332.4M994.5 325.7V329.8M995.5 323.3V328M998.5 321V330.3M999.5 318.2V325.7M1000.5 317.3V322.8M1001.5 315.4V322.1M1002.5 313.9V317.4M1003.5 308.1V321.2M1005.5 312.2V317.2M1006.5 308.7V314.9M1007.5 308V314.2M1008.5 305.2V314.8M1009.5 304.2V312.6M1010.5 302V310M1011.5 297.6V308.9M1012.5 300.3V308.9M1013.5 299.2V306.5M1014.5 293.8V303M1016.5 289.1V307M1017.5 289.3V298.2M1018.5 288.8V298.9M1019.5 285.7V292.5M1021.5 289.7V292.2M1022.5 288.5V291.3M1025.5 287.6V291.3M1028.5 288.2V291.4M1031.5 288.2V291.8M1032.5 286.3V292.2M1033.5 287.8V291.9M1034.5 287V290.2M1036.5 286V289.8M1037.5 284.2V289.1M1038.5 284V287.3M1039.5 282.1V286.9M1041.5 282.3V285.7M1042.5 277.1V284.8M1045.5 280.1V284.3M1047.5 276.3V284.9M1049.5 277.4V284.7M1052.5 283.1V290.1M1055.5 285.1V288.2M1057.5 281.2V287M1066.5 292.2V298M1067.5 289.9V297.8M1068.5 288V295.8M1069.5 287.2V292.9M1070.5 283.7V289.6M1076.5 290.1V296.1M1077.5 289V292.9M1080.5 293.4V297.6M1082.5 290.8V301.2M1083.5 287.4V295.7M1084.5 288.7V292.9M1085.5 281.1V292.3M1086.5 282V287.9M1090.5 289.6V292.6M1093.5 288V291.6M1095.5 286.8V292M1096.5 285.8V288.8M1098.5 284.5V289.5M1100.5 285.5V288.3M1101.5 284.2V288.2M1103.5 285.3V289M1104.5 284.2V288.4M1105.5 282.3V288.2M1106.5 281.8V287.3M1107.5 279.7V288.1M1111.5 276.6V284.8M1112.5 255.7V283M1114.5 255V261.9M1115.5 258.3V267.9M1116.5 249V260.6M1117.5 247.7V257.2M1118.5 245.7V252M1119.5 242.5V248.4M1120.5 237.7V246.9M1121.5 238.2V247.8M1122.5 236.1V242.2M1123.5 232.2V240.1M1124.5 230V240.7M1125.5 227.7V233.2M1126.5 226.2V235.5M1128.5 223.9V229.6M1129.5 223.8V228.3M1131.5 228V232.5M1132.5 224.9V229.8M1133.5 223.6V226.9M1134.5 225.1V228.4M1135.5 224.7V227.9M1137.5 224.5V228.1M1141.5 229.6V233M1142.5 228V232.7M1144.5 227.8V231.6M1145.5 227.2V230.6M1147.5 228.2V233.1M1150.5 230.5V236.8M1151.5 228.6V232.5M1152.5 229.1V233.3M1154.5 228.9V230.6M1155.5 226.1V231.7M1156.5 220.5V227.5M1157.5 221.4V229.2M1162.5 228.4V236M1164.5 229.7V232.9M1165.5 227.6V232.5M1169.5 233.8V236M1170.5 234.3V236M1171.5 231V235.7M1173.5 235V240M1175.5 232.5V238.9M1177.5 235.1V240.3M1180.5 233.8V241.4M1181.5 233.8V237.3M1182.5 227.4V236.4M1184.5 228.7V239.4M1185.5 226.2V232.9M1187.5 225.2V229M1191.5 229.4V234.8M1194.5 231V237.6M1195.5 228.1V234.4M1196.5 227.2V234.4M1197.5 226.5V232.6M1198.5 224.9V233.6M1199.5 226.7V229.7M1200.5 223.1V228.6M1208.5 235.6V238.9M1211.5 235.5V241.7M1212.5 234.6V238.2M1214.5 234.7V236.1M1219.5 242.3V249.1M1223.5 243.3V248.4M1224.5 241.7V246.1M1227.5 246V248.4M1228.5 243.6V248.2M1232.5 244.6V250.9M1233.5 246V248.4M1235.5 243.9V247.5M1237.5 245.2V250M1238.5 243.3V249.4M1241.5 244.1V250M1243.5 248.6V251M1245.5 244V252.3M1247.5 246.9V253.1M1248.5 246.9V249.9M1251.5 247.8V260.6M1266.5 277.7V283.9M1269.5 278.6V283.2M1271.5 275.7V281.1M1273.5 277.7V280.9M1278.5 283.4V291.1M1287.5 295.4V302.5M1289.5 300.7V304.2M1290.5 298V305.2M1292.5 297.8V301.6M1293.5 296.8V300.7M1294.5 292V300M1296.5 292.1V297M1298.5 290.6V295.9M1300.5 287.2V292.3M1301.5 287.9V290.7M1303.5 289.9V293.8M1312.5 299.3V301.1M1313.5 298.4V300.9M1315.5 297.4V300.9M1318.5 298.3V301.7M1319.5 296.3V300.3M1320.5 294.4V297.8M1322.5 296.8V301M1324.5 295.5V301M1327.5 294.1V300.4M1330.5 296V298.5M1332.5 293.3V298.2M1333.5 292.5V295.1M1337.5 295.3V299.6M1339.5 300V303.2M1340.5 296.1V301.3M1341.5 292.7V300.2M1342.5 296.1V298.7M1343.5 296.1V298.7M1344.5 294.2V297.6M1345.5 294.1V298.9M1348.5 296.2V299.3M1350.5 291.1V299.6M1351.5 292.6V298.2M1352.5 286.5V295.1M1353.5 283V292.3M1355.5 287.9V291.1M1358.5 291.7V294M1361.5 289V298.4M1378.5 324.6V329.8M1386.5 334.3V338.9M1387.5 333.4V339.2M1389.5 327.8V338.9M1391.5 330.6V336.8M1392.5 328.9V334.6M1393.5 329V332.5M1394.5 329.2V331.9M1396.5 328.9V332.5M1399.5 326.9V333.6M1410.5 338.6V350.6M1411.5 333.3V342.2M1412.5 328.3V335.5M1419.5 343.8V350.1M1420.5 345.3V347.3M1421.5 342.8V348.9M1422.5 338.8V347.2M1424.5 337V341.4M1426.5 335.9V341.7M1427.5 335.3V342.7M1428.5 333.7V338.1M1430.5 334.2V338.6M1432.5 333.6V338.5M1436.5 338.8V344.2M1437.5 338.7V342.3M1438.5 338.1V341M1440.5 337.2V341M1441.5 335.4V339.8M1442.5 331.9V339M1444.5 325.2V335.9M1445.5 324.4V332.7M1446.5 327.2V333.4M1447.5 324.3V331.3M1448.5 320.9V329.6M1457.5 330.9V333.8M1460.5 331.8V334.9M1462.5 328.3V337.1M1476.5 375.3V383.9M1481.5 381.4V389.6M1482.5 377.8V385.3M1484.5 375.6V381.3M1486.5 375.3V379.4M1487.5 374.2V379.2M1489.5 378.2V382.5M1491.5 383.1V390.9M1493.5 375.2V387.5M1497.5 396.8V409M1499.5 402V406.3M1501.5 396.9V406M1502.5 390.1V401.5M1503.5 386.3V398.3M1506.5 381.7V400M1507.5 373.7V386.1M1509.5 372.4V381.1M1512.5 372.7V379M1517.5 375.3V384.5M1522.5 379.3V384.2M1524.5 378.3V383.8M1532.5 382.4V389.1M1534.5 382.9V386.4M1537.5 385.4V389.1M1538.5 383.6V389.2M1540.5 379.4V392.9M1541.5 374.4V386.9M1542.5 369.1V378.4M1550.5 384.1V389.3M1551.5 377.5V386.6M1552.5 375.4V384.2M1554.5 372.5V383.5M1558.5 378.5V382.3M1559.5 376.4V380.6M1560.5 372.9V380.7M1562.5 374.9V382M1564.5 372.5V381.1M1576.5 380.6V391.1M1582.5 404.8V410.1M1583.5 404.5V406.7M1584.5 403V409.5M1587.5 398.7V413.6M1588.5 401V410.3M1589.5 395.8V409.3M1590.5 393.7V403.4M1591.5 388V402.8M1592.5 382.8V390.5M1593.5 377.4V386.2M1594.5 379.2V382.8M1595.5 374.6V386.5M1596.5 371.3V379.9M1597.5 363.9V382.5M1599.5 369.3V375.2M1600.5 366.8V373.4M1601.5 366.1V371.2M1602.5 363.6V369.6M1603.5 359V365.5M1604.5 358V362.2M1613.5 372.1V377.8M1617.5 374.3V380.5M1619.5 374.8V378.8M1620.5 373.5V378.1M1622.5 371.6V380.6M1624.5 368.2V375.9M1625.5 367.3V371.5" stroke="#2a9ad6" stroke-width="1"/>
<path d="M45.5 360.7V364.7M49.5 357.5V360.8M50.5 359V362.1M52.5 359.4V360.9M56.5 356.1V382.5M57.5 356.1V364.2M58.5 361.2V365.8M59.5 358.8V367.7M61.5 365V367.1M62.5 363.4V369.2M63.5 363V368.5M64.5 366.6V371.4M66.5 365.5V368.9M68.5 365.9V370.7M69.5 366.6V371.3M71.5 366.1V372.3M73.5 367.7V372.7M75.5 367.3V370.1M76.5 366.8V370.9M77.5 366.8V370.9M78.5 368.1V371.6M83.5 364.4V368.3M85.5 361.6V367M86.5 362.3V367.3M88.5 361.9V365.6M89.5 363.3V367.8M91.5 360.5V366M92.5 363.5V368M94.5 362.5V368.3M97.5 362V369.1M98.5 366.7V370.5M99.5 367V369.9M100.5 367V371.6M104.5 361V366.8M106.5 360.2V365.9M108.5 361.4V364.8M110.5 362.4V367.6M113.5 360.1V363.2M114.5 360.7V364.3M118.5 358.7V363.1M121.5 358.8V364M131.5 340.9V348.1M135.5 338.3V343M136.5 338.4V341.7M138.5 336V338.3M141.5 332V335.6M144.5 331.5V333.9M145.5 332.6V336.6M147.5 330.6V336M149.5 331.9V334.8M150.5 330.2V335.4M151.5 334V337.2M152.5 321.5V336.8M153.5 334.8V347.5M154.5 336.2V357.6M155.5 353.2V368.4M156.5 354.1V368.2M157.5 359.1V370.5M158.5 359.7V376.4M159.5 367.9V381M160.5 372.8V384.9M164.5 374.6V380.1M165.5 375.5V384.7M166.5 380.9V386.5M167.5 382.9V386M176.5 371V379M177.5 372.7V378M178.5 375.9V381.9M183.5 376V378.8M185.5 376.8V381.4M186.5 378.3V383.2M188.5 375.9V380.5M189.5 377.7V380.7M193.5 375.3V380.3M196.5 375.9V381.9M203.5 364V372.9M204.5 365.9V369.2M206.5 360.3V364.5M207.5 361.1V365.8M209.5 361.9V367.6M211.5 357.3V363.2M213.5 358V361.9M214.5 358.5V361.6M216.5 355V360.8M218.5 356.4V362.7M220.5 358V364M221.5 359.8V366.5M225.5 360.9V363.9M226.5 359.2V365.5M227.5 364V370.9M239.5 332.1V342.1M240.5 333.9V346.5M241.5 337.9V342.8M242.5 337.6V343.7M243.5 341.8V344.8M244.5 341V348.9M250.5 329.7V342.5M251.5 335.8V341.5M252.5 338.2V343.7M253.5 339.4V350.2M254.5 341.1V352.2M257.5 344.5V350.1M261.5 340.5V343.2M262.5 339.5V343.1M264.5 338.2V350.2M265.5 345.2V354.5M266.5 347.1V357.1M268.5 349.1V357.1M269.5 352.9V362.3M271.5 356.1V360.1M272.5 357.7V361.7M275.5 353.7V357.4M277.5 350.5V356.3M281.5 347.6V354.4M289.5 346.5V350.7M291.5 345.3V349M293.5 345.4V351.9M295.5 348.5V354.5M296.5 346V352.7M297.5 349.8V354.3M299.5 350.8V355.9M300.5 351.7V357.7M302.5 353V359.1M303.5 355V360.1M306.5 356.2V361.6M307.5 356.7V365.4M309.5 358.6V364.4M310.5 360.8V369.2M311.5 364.8V367.9M318.5 357.6V361.2M321.5 352.7V358.1M322.5 353.8V358.5M323.5 354.2V362.7M324.5 355.4V364.2M325.5 358.2V364.7M327.5 358.7V365M330.5 358.4V367.4M331.5 365V367.1M333.5 363.2V372.5M334.5 366.8V371.8M336.5 366.9V370.2M340.5 364.4V365.9M341.5 362.2V368.1M342.5 364.5V370.6M344.5 364.3V373.5M345.5 370.1V374.2M348.5 361.9V372.6M350.5 363.8V367.4M351.5 365.5V368M353.5 359.1V365.7M354.5 362.5V369.5M356.5 365.6V369.9M357.5 367.4V371.5M361.5 364V368.4M362.5 363.7V369.4M363.5 363.2V371.4M364.5 365.8V370.3M365.5 368.3V371.6M366.5 368.2V374.6M370.5 363.4V372M374.5 361V368.1M375.5 366.9V369.1M376.5 366.7V370.8M379.5 367.2V370.3M381.5 364.1V371.5M384.5 365.7V368.9M385.5 366.8V369.8M387.5 362.6V365.7M388.5 363.6V366.4M392.5 359.7V368.3M396.5 357.4V367.3M397.5 360V371.9M398.5 366.3V377M399.5 372.1V378.9M401.5 371.3V379.4M403.5 373.9V382.5M404.5 377.3V383M405.5 380.3V384.4M407.5 381V388M408.5 381.9V388.4M409.5 384.1V389.4M410.5 386.3V389.3M411.5 386.9V390.3M412.5 384.9V391.7M413.5 387.2V393.5M414.5 385.3V394M415.5 385.8V396.4M416.5 390.1V396.5M417.5 391V398.6M418.5 396.4V401.4M419.5 397.6V401.4M426.5 387V390M427.5 387.6V391M428.5 387.4V391.8M431.5 386.4V389.2M433.5 384.3V385.6M435.5 382.6V384.6M436.5 381.3V390.1M437.5 385.6V391.2M441.5 376.7V383.5M442.5 380.1V391.2M443.5 383.1V388.9M444.5 382.8V395.5M445.5 388.3V401.3M446.5 397.4V410.4M447.5 399.9V410.3M448.5 401.2V413.3M449.5 407.2V414.9M453.5 407.9V414.2M454.5 405.7V413.9M455.5 409.4V418.5M456.5 413.6V421.5M457.5 417.3V424.3M458.5 421.6V425.8M459.5 422.5V432.4M463.5 422.1V430.1M465.5 419.7V426M469.5 417.6V423.1M471.5 417.9V420.7M474.5 416.1V418.4M479.5 414.3V419.9M481.5 414V419.6M482.5 415.6V420.4M484.5 415.2V422.9M485.5 418.3V423.8M486.5 420V426.7M487.5 424.7V430.6M492.5 409.9V421.5M494.5 413.6V416M496.5 410.8V414M498.5 410.6V415.2M499.5 412V416.2M501.5 407.7V417.7M502.5 411.7V416.2M504.5 413V416.3M505.5 414.7V419M506.5 414.6V420.3M508.5 415.4V418.5M518.5 403.8V408.6M519.5 406.3V411.4M520.5 407.4V417.8M521.5 405.4V416.8M522.5 407.9V426M523.5 412.8V423.5M524.5 420.9V425.6M525.5 421.7V430.3M526.5 424.8V432.3M528.5 427.2V430.9M537.5 415.3V421.7M538.5 416.9V424.3M540.5 418.6V424.6M541.5 420.3V425.7M542.5 424.2V430.3M543.5 425.6V430.7M551.5 421.8V424M552.5 420.6V425.9M553.5 424.2V426.9M554.5 424.6V426.7M555.5 424.8V428.9M556.5 421.7V428M557.5 425.8V433.8M558.5 428.8V472M563.5 394V403.7M564.5 394.7V407.1M568.5 385.3V388.4M569.5 383.5V392.7M571.5 389.8V395.6M576.5 389.9V396.1M577.5 392.9V396.4M578.5 393.2V399.5M581.5 394.1V395.7M588.5 381.5V384.1M589.5 380.6V386.4M591.5 382.7V393.2M592.5 387.5V390.5M594.5 387V391.7M596.5 384.6V388.9M608.5 359.5V366.9M609.5 363V373.7M610.5 362.8V370.9M611.5 366.9V380.2M612.5 375.2V379.4M613.5 375.8V380.1M617.5 361.1V365.4M618.5 364.1V369.6M619.5 367.2V369.9M620.5 365.5V372.9M622.5 369.2V373.1M628.5 363.6V368.2M630.5 359.7V369.6M639.5 323.1V327.4M640.5 325.3V334.2M641.5 327.2V331.3M642.5 328.2V336.4M646.5 327.1V331.3M647.5 328.1V338.1M649.5 332.5V340.1M650.5 334.7V343.2M652.5 335.2V339.6M653.5 336.5V339.3M657.5 334.2V339.2M659.5 335V337.7M661.5 331.6V335M665.5 330V334.2M667.5 331.3V335.6M668.5 332.9V338.7M670.5 331.4V335.5M673.5 331.4V335.7M674.5 331.6V334.5M679.5 324.5V328M680.5 325.7V329.4M682.5 324.9V327.2M684.5 324V329M686.5 326V330.6M688.5 322.4V333.4M689.5 323.9V332.8M691.5 324.4V342.2M692.5 332.6V353.2M693.5 343.1V357.6M694.5 354.4V376M695.5 367.3V373.7M699.5 357.3V364.7M700.5 355.2V367.5M705.5 332.9V344.3M706.5 335.4V345.4M712.5 331V335.7M713.5 332.3V339.2M714.5 333.5V337.8M716.5 335.8V338.3M719.5 332.2V339.1M721.5 332V338.5M729.5 316V324.2M730.5 313.5V328.5M731.5 321.3V330.1M732.5 326.6V339.1M734.5 332.7V347M735.5 333.9V343.1M737.5 338.2V340.7M739.5 336.2V340.3M742.5 332.5V337.8M745.5 334.2V338.2M748.5 333.7V336.7M750.5 330.3V336.4M751.5 333.3V336.6M752.5 333.1V336.1M754.5 331.8V335.9M756.5 331.8V335M757.5 332.2V336.8M759.5 329.5V336.4M761.5 328.2V338.1M762.5 334V338.4M763.5 335.3V339.5M766.5 333.5V338.4M769.5 333.1V341.8M778.5 314.6V325.9M780.5 315.7V323.5M781.5 319.1V322.3M787.5 310.1V314.7M791.5 309.5V312.8M792.5 310.5V314.3M793.5 311.8V313.7M794.5 311.4V318.5M795.5 312.5V316.1M797.5 313.1V322.4M798.5 318.2V323.3M799.5 316.3V328.7M800.5 321.2V332.2M801.5 326.3V334.5M803.5 325.3V335.2M804.5 332.6V336.5M805.5 329.9V338.1M806.5 334.1V338.7M807.5 333.1V339.3M809.5 333.2V341.5M812.5 339.2V341.7M814.5 337.5V341.4M816.5 336.5V339.7M818.5 333.7V340.4M819.5 337.4V342.3M820.5 338V343.1M822.5 340.2V341.9M823.5 340.2V344.8M825.5 339.7V343.4M826.5 339V345.2M828.5 340.3V344.1M833.5 332.1V337.8M834.5 336.1V341M836.5 329.8V339.7M837.5 338.1V343.6M839.5 338.2V346.2M840.5 340.4V345.1M841.5 342V345.6M842.5 341.5V349.6M844.5 344.4V349.6M846.5 345.3V348.3M849.5 344.8V349.1M852.5 344.2V347.7M853.5 346V350.3M855.5 345.4V348.9M856.5 343.9V349.3M859.5 344.8V350.4M862.5 343.1V348M863.5 346V349M864.5 346.2V349.8M868.5 344.8V347.8M869.5 345.9V351.6M871.5 345.1V349.8M872.5 345V349.2M874.5 343.8V350.4M875.5 348.5V351.2M876.5 348.2V352.9M883.5 339.6V344.2M884.5 339.7V343.6M885.5 341.6V344.7M887.5 339.8V342.3M889.5 337.3V345.4M891.5 341.1V344.4M892.5 341.5V343.9M894.5 339.5V344.8M897.5 340V345.1M898.5 342.7V345.9M900.5 338.4V351.3M901.5 344.7V347.7M902.5 344.2V352.4M903.5 348.3V356.2M904.5 348.6V358.7M905.5 353.4V355.9M906.5 353.5V358.8M911.5 348.6V355.2M919.5 341.5V344.3M921.5 342V346.3M924.5 341.9V345.3M926.5 340.5V344.2M927.5 339.5V344.7M928.5 340.1V345.4M935.5 334.9V341.7M936.5 334.8V344.3M937.5 339.6V344.4M938.5 342V352.8M939.5 345.9V352.1M940.5 346.9V357M941.5 351.1V359.3M942.5 354.5V359.4M943.5 355.6V362.1M945.5 356.4V359.1M947.5 354.3V357.3M948.5 354.8V357.7M950.5 348.4V356.7M951.5 350.6V354.8M954.5 352.7V358.5M957.5 350.6V356.5M959.5 350.1V356.1M961.5 351.5V356.8M962.5 351.3V357.1M966.5 349.5V353.9M969.5 337.7V345.8M971.5 343.7V346.2M973.5 338.9V344.9M974.5 343V348.4M978.5 338.6V342.7M980.5 339V345.3M984.5 335.8V339.6M986.5 333.7V337.5M988.5 331.3V335.5M990.5 331V335.3M993.5 322.6V329.3M996.5 324.6V332.5M997.5 321.9V331.8M1004.5 306.7V316.4M1015.5 295.4V302.4M1020.5 286.9V293.9M1023.5 286.8V291.5M1024.5 289V292.2M1026.5 286.3V291.1M1027.5 288.1V291.1M1029.5 286.9V290M1030.5 286.7V290.2M1035.5 284.5V289.7M1040.5 282V284.6M1043.5 280.8V284.1M1044.5 280.9V283.3M1046.5 280.1V284.4M1048.5 276.1V281.2M1050.5 275.2V286M1051.5 281.9V291.5M1053.5 283.5V289.1M1054.5 284.4V288M1056.5 283.3V288.8M1058.5 281.4V287.5M1059.5 285.4V288.1M1060.5 285V291.5M1061.5 283.4V295M1062.5 288.2V294.5M1063.5 289.1V294.3M1064.5 292.2V298M1065.5 292.8V298.5M1071.5 285.7V290.3M1072.5 287.8V292.2M1073.5 288.4V295.2M1074.5 288.2V294M1075.5 290.6V298.4M1078.5 288.2V295.2M1079.5 293.3V297.8M1081.5 294.6V300.8M1087.5 280.8V287.3M1088.5 283.2V292.5M1089.5 289.4V294.1M1091.5 287.8V292.2M1092.5 289.6V291.7M1094.5 286.2V294.4M1097.5 285.3V290.5M1099.5 285.7V288.6M1102.5 283.5V288.8M1108.5 279.4V287.2M1109.5 275.9V284.5M1110.5 278.2V284.9M1113.5 256.5V263.4M1127.5 226.9V230.1M1130.5 223.1V231.2M1136.5 223.6V230.1M1138.5 224.9V229.9M1139.5 225.9V234.9M1140.5 229.9V234.4M1143.5 226.1V231.2M1146.5 228.7V233M1148.5 229.1V231.8M1149.5 227.5V233.7M1153.5 227.8V234.2M1158.5 221.5V227.5M1159.5 224.6V231.1M1160.5 227V234M1161.5 229.2V238.8M1163.5 230.5V233.3M1166.5 228.1V231.3M1167.5 227.8V233.7M1168.5 230.4V237.7M1172.5 231.5V240.1M1174.5 234.6V237.9M1176.5 234.2V237.4M1178.5 235.2V239.4M1179.5 236.3V242M1183.5 231.1V234M1186.5 225V229.4M1188.5 225.8V227.3M1189.5 226V230.2M1190.5 225.6V232.2M1192.5 229.6V236.2M1193.5 231.7V237.1M1201.5 221.5V225.5M1202.5 220V225.6M1203.5 222.2V229.6M1204.5 223.4V229.6M1205.5 226.7V231.4M1206.5 226.8V233.7M1207.5 228.1V238.6M1209.5 235.8V243.6M1210.5 238.6V241.3M1213.5 231.5V238.5M1215.5 233.8V237.4M1216.5 234.9V242.8M1217.5 236.2V245.2M1218.5 241.3V247.6M1220.5 244.4V248.5M1221.5 243.1V247.5M1222.5 245.3V246.8M1225.5 242.3V247.6M1226.5 241.9V247.9M1229.5 243V247.8M1230.5 243.7V247.5M1231.5 244.2V248.5M1234.5 246V248.6M1236.5 242.8V250M1239.5 243.2V249.5M1240.5 244.8V249.7M1242.5 243.6V252.2M1244.5 247.6V252M1246.5 244.3V251.2M1249.5 246.8V254M1250.5 246.6V252.2M1252.5 248.1V255.6M1253.5 249.4V259.3M1254.5 253.3V263.4M1255.5 256.6V262.5M1256.5 253.4V264M1257.5 261.4V267.4M1258.5 258.7V267.3M1259.5 260.8V270M1260.5 261.6V272.7M1261.5 268.1V274.7M1262.5 272V276M1263.5 273.7V278.9M1264.5 274.1V280.4M1265.5 273.8V281.6M1267.5 277.9V281.6M1268.5 279.8V283.2M1270.5 278.9V281.1M1272.5 276.7V280M1274.5 275.9V282.6M1275.5 277.4V285.6M1276.5 281.1V284.2M1277.5 281.7V288.7M1279.5 284.6V289.8M1280.5 286.3V290.8M1281.5 285.8V291.4M1282.5 287.8V296.9M1283.5 292.5V295.9M1284.5 287.6V298.5M1285.5 292.1V303.8M1286.5 295.3V302.9M1288.5 297.4V305.2M1291.5 297.6V301.8M1295.5 292.1V298.6M1297.5 290.5V298.8M1299.5 289.8V292M1302.5 287.4V291.7M1304.5 289.5V293.6M1305.5 290.3V296.4M1306.5 290.3V296M1307.5 292.1V296.3M1308.5 294.4V301.7M1309.5 293.9V302.7M1310.5 297.2V299.4M1311.5 296.2V301.1M1314.5 298.1V300.7M1316.5 298.6V300.2M1317.5 297.6V300.3M1321.5 295.7V300.1M1323.5 296.4V299.8M1325.5 295.5V299.5M1326.5 295.6V299.6M1328.5 293.3V297.9M1329.5 295.2V299.1M1331.5 296.6V299.6M1334.5 291.7V295.8M1335.5 293.5V300.1M1336.5 293.2V300.2M1338.5 293.8V302.3M1346.5 293.9V299.5M1347.5 296.1V300.9M1349.5 295.7V303.4M1354.5 285.5V293.5M1356.5 286.8V292.9M1357.5 291.2V293.2M1359.5 290V294M1360.5 288V296.9M1362.5 289.5V294M1363.5 289.6V295.5M1364.5 286.4V300.5M1365.5 296.6V301.5M1366.5 299.4V305.4M1367.5 294.4V306.4M1368.5 300V308.9M1369.5 301.9V314.9M1370.5 306.2V313.2M1371.5 306.7V316M1372.5 310.6V318.4M1373.5 311V322.7M1374.5 312.2V318.3M1375.5 310V323.4M1376.5 316.8V324.9M1377.5 322V329M1379.5 319.6V331.3M1380.5 324.5V334.9M1381.5 329V335.3M1382.5 329.5V338.1M1383.5 330.3V336.6M1384.5 334.3V339.3M1385.5 335.5V338.9M1388.5 332.4V336.4M1390.5 330.9V335.7M1395.5 328.8V332M1397.5 328.6V331.8M1398.5 328.3V332M1400.5 327.4V331.9M1401.5 329.9V331.9M1402.5 330.1V334.2M1403.5 326.5V342M1404.5 334.8V343.2M1405.5 333.1V342.7M1406.5 336.4V346.3M1407.5 339.1V343.3M1408.5 340.2V347.6M1409.5 344.5V349.8M1413.5 330.2V337.3M1414.5 335.1V339.2M1415.5 336.1V343.8M1416.5 336.8V342.9M1417.5 341.5V349.6M1418.5 344.6V348.1M1423.5 337.9V341.4M1425.5 337.5V340.2M1429.5 333.1V338.1M1431.5 334.6V337.3M1433.5 333.9V340.1M1434.5 337.2V344M1435.5 338.6V343.6M1439.5 336.8V342M1443.5 333.1V338M1449.5 318V325.2M1450.5 318.7V325M1451.5 322.2V329.5M1452.5 326.7V333.4M1453.5 325.9V338.6M1454.5 329.3V334.9M1455.5 330.2V336.9M1456.5 330.2V334.4M1458.5 330.6V333.1M1459.5 328.8V336M1461.5 330.6V339.3M1463.5 330.8V342.4M1464.5 336.8V345M1465.5 339.1V347.8M1466.5 342.6V351.3M1467.5 348.8V357.7M1468.5 352.8V361.8M1469.5 355.6V367.4M1470.5 357.7V367.9M1471.5 356.6V370.4M1472.5 364.5V372.6M1473.5 365.5V375.6M1474.5 373.1V379.3M1475.5 369.5V381.9M1477.5 376.5V380.8M1478.5 376.4V384.1M1479.5 382.1V386M1480.5 382.8V388.5M1483.5 379V381.9M1485.5 375.4V380.2M1488.5 373.9V382.1M1490.5 377.7V385.3M1492.5 377.4V390.9M1494.5 381.7V397.8M1495.5 389.4V405.2M1496.5 400.3V401M1498.5 397.7V410M1500.5 403.1V408.4M1504.5 387.8V396.4M1505.5 387.6V399.8M1508.5 373V385M1510.5 373V381.2M1511.5 376.7V379.3M1513.5 373V375.9M1514.5 374.1V379.7M1515.5 374V379.1M1516.5 373.7V382.3M1518.5 373.7V383.3M1519.5 377.1V384.9M1520.5 381.4V383.8M1521.5 381.1V384.7M1523.5 378.6V382.8M1525.5 377.7V382.1M1526.5 378.7V380.7M1527.5 376.9V381.5M1528.5 378.4V382.9M1529.5 376.1V383.8M1530.5 379.7V384.4M1531.5 380.8V388.3M1533.5 382.8V387.3M1535.5 382.8V386M1536.5 384.5V389.6M1539.5 380.5V386.2M1543.5 369.3V374.3M1544.5 371.1V375.9M1545.5 371.4V375.2M1546.5 368.3V381.5M1547.5 374V382.5M1548.5 377.1V389.6M1549.5 385.6V389.5M1553.5 375.6V382.8M1555.5 374.9V379M1556.5 375.1V380.4M1557.5 378.7V381.8M1561.5 374.9V380.1M1563.5 375.1V379.1M1565.5 373.2V380.2M1566.5 374.7V379.7M1567.5 377V385.4M1568.5 380.4V384.4M1569.5 371.1V394M1570.5 368.9V376.3M1571.5 373.4V380.6M1572.5 371.6V384.4M1573.5 379.4V384.4M1574.5 374.9V387.4M1575.5 379V395.8M1577.5 387.1V397.8M1578.5 391.7V405.4M1579.5 395.5V405.3M1580.5 402V409.6M1581.5 403.2V411.5M1585.5 403.4V408.5M1586.5 403.6V409.2M1598.5 367.7V377.7M1605.5 357.7V365M1606.5 355.1V369.7M1607.5 357.8V370.7M1608.5 366.6V374M1609.5 371.1V375.6M1610.5 373.1V377.7M1611.5 374.2V382.1M1612.5 374.7V378M1614.5 372.9V377.7M1615.5 374.2V378.5M1616.5 375.5V378.8M1618.5 374.2V379.7M1621.5 372V377M1623.5 371.2V375.1M1626.5 367.2V376.8M1627.5 372V375.3" stroke="#d62a2a" stroke-width="1"/>
<path d="M44.5 362.1L46.5 362L48.5 361.6L50.5 361.1L52.5 360.5L54.5 359.8L56.5 360.4L58.5 361L60.5 362.8L62.5 364.4L64.5 365.5L66.5 366.2L68.5 366.8L70.5 367.3L72.5 367.8L74.5 368.3L76.5 368.7L78.5 369.1L80.5 369.2L82.5 368.6L84.5 367.4L86.5 366.5L88.5 366L90.5 365.7L92.5 365.6L94.5 365.5L96.5 365.7L98.5 366.2L100.5 366.8L102.5 366.8L104.5 366.1L106.5 365.5L108.5 365.3L110.5 364.9L112.5 364.2L114.5 363.5L116.5 363.1L118.5 362.8L120.5 362.5L122.5 362.2L124.5 361.7L126.5 359.3L128.5 355.6L130.5 352.1L132.5 349.6L134.5 347.3L136.5 345L138.5 342.6L140.5 340.1L142.5 337.7L144.5 336.1L146.5 335L148.5 334.4L150.5 334.1L152.5 334.6L154.5 339.4L156.5 346.9L158.5 354.3L160.5 362.7L162.5 367.7L164.5 371.1L166.5 374.7L168.5 377.6L170.5 379.2L172.5 379.2L174.5 377.6L176.5 376.6L178.5 376.9L180.5 377.3L182.5 377.1L184.5 377.3L186.5 378.1L188.5 378.7L190.5 378.8L192.5 378.5L194.5 378.2L196.5 377.8L198.5 377.4L200.5 376.2L202.5 374.3L204.5 371.9L206.5 369.4L208.5 367.3L210.5 365.6L212.5 364L214.5 362.7L216.5 361.5L218.5 360.5L220.5 360.8L222.5 361.9L224.5 361.9L226.5 362.6L228.5 363.5L230.5 360.6L232.5 354.7L234.5 349L236.5 344.4L238.5 341.3L240.5 340.7L242.5 341.5L244.5 342.6L246.5 341.9L248.5 339.5L250.5 337.9L252.5 338.8L254.5 341.7L256.5 344.1L258.5 344.9L260.5 343.9L262.5 342.9L264.5 342.9L266.5 345.7L268.5 348.7L270.5 351.6L272.5 353.9L274.5 355.6L276.5 355.8L278.5 354.9L280.5 353.3L282.5 353.9L284.5 353.8L286.5 352.2L288.5 350.9L290.5 350L292.5 349.5L294.5 349.7L296.5 350.5L298.5 351.4L300.5 352.3L302.5 353.5L304.5 354.9L306.5 356.4L308.5 358.2L310.5 360.2L312.5 362.2L314.5 362.9L316.5 362.5L318.5 361.2L320.5 359.4L322.5 358.9L324.5 359.8L326.5 361L328.5 362.1L330.5 363.2L332.5 364.6L334.5 366.3L336.5 367.3L338.5 367.1L340.5 366.1L342.5 366.1L344.5 367.2L346.5 368.6L348.5 368.8L350.5 368L352.5 366.5L354.5 365.9L356.5 366.3L358.5 367L360.5 366.6L362.5 366.8L364.5 367.7L366.5 369L368.5 369.6L370.5 369.4L372.5 368.5L374.5 367.9L376.5 367.8L378.5 368L380.5 368.3L382.5 368.1L384.5 367.7L386.5 367.1L388.5 366.4L390.5 365.7L392.5 364.9L394.5 363.8L396.5 363L398.5 365.4L400.5 369.1L402.5 372.3L404.5 375.2L406.5 377.9L408.5 380.3L410.5 382.5L412.5 384.5L414.5 386.3L416.5 388.9L418.5 392.2L420.5 394.3L422.5 394.3L424.5 392.7L426.5 391L428.5 390.7L430.5 390.4L432.5 389.2L434.5 387.6L436.5 387.6L438.5 387.3L440.5 385L442.5 384L444.5 385.9L446.5 390.8L448.5 396.4L450.5 401.5L452.5 404.1L454.5 406.5L456.5 410.2L458.5 414.5L460.5 418.2L462.5 420.1L464.5 420.9L466.5 421L468.5 420.7L470.5 420.1L472.5 419.4L474.5 418.6L476.5 418L478.5 417.7L480.5 417.6L482.5 418L484.5 418.9L486.5 420.9L488.5 422.9L490.5 421L492.5 418.8L494.5 417.1L496.5 415.8L498.5 414.9L500.5 414.6L502.5 414.7L504.5 415.4L506.5 416.7L508.5 417.1L510.5 416.7L512.5 415.7L514.5 414.2L516.5 412.3L518.5 410.7L520.5 411L522.5 413.4L524.5 416.6L526.5 420.3L528.5 423.2L530.5 424.9L532.5 425.5L534.5 424.6L536.5 422.8L538.5 422.1L540.5 422.5L542.5 423.7L544.5 425.4L546.5 426L548.5 425.7L550.5 425L552.5 424.9L554.5 425.4L556.5 426.1L558.5 432.7L560.5 428.6L562.5 418.8L564.5 412.1L566.5 406.2L568.5 399.7L570.5 396.4L572.5 395L574.5 393.7L576.5 393.3L578.5 394.3L580.5 394.8L582.5 393.7L584.5 391.8L586.5 389.4L588.5 387L590.5 386.1L592.5 386.5L594.5 387.6L596.5 387.6L598.5 386.3L600.5 384.2L602.5 381.8L604.5 378.7L606.5 373.6L608.5 369.9L610.5 369.2L612.5 371.3L614.5 372.7L616.5 370.8L618.5 368.8L620.5 370L622.5 370.5L624.5 369.9L626.5 369.2L628.5 368.4L630.5 367.3L632.5 364.3L634.5 356.8L636.5 347L638.5 338.6L640.5 335.1L642.5 334.1L644.5 333L646.5 331.7L648.5 332.3L650.5 334.3L652.5 335.6L654.5 336.4L656.5 336.7L658.5 336.5L660.5 336.1L662.5 335.2L664.5 334L666.5 333.5L668.5 333.5L670.5 333.7L672.5 333.7L674.5 333.6L676.5 333L678.5 331.5L680.5 329.7L682.5 328.5L684.5 327.9L686.5 327.6L688.5 328L690.5 328.9L692.5 333.7L694.5 345.1L696.5 352.3L698.5 355L700.5 356.5L702.5 355.1L704.5 350.2L706.5 346.8L708.5 344.7L710.5 341.4L712.5 338.7L714.5 338.3L716.5 338L718.5 337.2L720.5 336.1L722.5 334.8L724.5 332.9L726.5 330L728.5 326.7L730.5 324.8L732.5 327L734.5 330.2L736.5 333.5L738.5 335.4L740.5 336.3L742.5 336.5L744.5 336.4L746.5 336.3L748.5 336L750.5 335.6L752.5 335.1L754.5 334.6L756.5 334.1L758.5 333.9L760.5 333.7L762.5 334.2L764.5 335.2L766.5 335.6L768.5 335.1L770.5 333.9L772.5 332.1L774.5 329.8L776.5 327.3L778.5 325.1L780.5 323.2L782.5 321.3L784.5 319.1L786.5 316.9L788.5 315.2L790.5 313.9L792.5 313.1L794.5 313.3L796.5 314.1L798.5 315.9L800.5 319.1L802.5 322.6L804.5 325.9L806.5 329L808.5 331.8L810.5 334.5L812.5 336.3L814.5 337.3L816.5 337.8L818.5 338.4L820.5 339.2L822.5 339.9L824.5 340.4L826.5 340.7L828.5 340.5L830.5 339.6L832.5 338.3L834.5 337.7L836.5 338.1L838.5 339.2L840.5 340.6L842.5 342.1L844.5 343.9L846.5 345.4L848.5 346.1L850.5 346.2L852.5 346.2L854.5 346.3L856.5 346.4L858.5 346.5L860.5 346.7L862.5 346.8L864.5 346.8L866.5 346.8L868.5 346.9L870.5 346.9L872.5 347.1L874.5 347.8L876.5 348.8L878.5 348.9L880.5 347.7L882.5 345.6L884.5 344L886.5 343.2L888.5 342.7L890.5 342.6L892.5 342.6L894.5 342.7L896.5 342.8L898.5 343.1L900.5 343.6L902.5 344.8L904.5 347.1L906.5 350.1L908.5 351.7L910.5 351.8L912.5 351.1L914.5 349.8L916.5 348.2L918.5 346.6L920.5 345.5L922.5 344.7L924.5 344.2L926.5 344.1L928.5 344.3L930.5 343.8L932.5 342.2L934.5 340.7L936.5 340.5L938.5 342L940.5 345.3L942.5 349L944.5 352.1L946.5 353.5L948.5 353.8L950.5 353.7L952.5 353.7L954.5 353.8L956.5 354L958.5 354L960.5 354L962.5 353.9L964.5 353.8L966.5 353.1L968.5 350.4L970.5 348.2L972.5 346.9L974.5 346.2L976.5 345.5L978.5 344.3L980.5 342.9L982.5 341.3L984.5 339.8L986.5 338.2L988.5 336.7L990.5 335.3L992.5 333.3L994.5 331.1L996.5 329.6L998.5 328.4L1000.5 325.8L1002.5 322.4L1004.5 319.5L1006.5 317L1008.5 314.7L1010.5 312.3L1012.5 309.9L1014.5 307.1L1016.5 304.1L1018.5 300.4L1020.5 296.9L1022.5 294.6L1024.5 293.2L1026.5 292.2L1028.5 291.3L1030.5 290.5L1032.5 289.8L1034.5 289.2L1036.5 288.7L1038.5 287.7L1040.5 286.6L1042.5 285.4L1044.5 284.3L1046.5 283.3L1048.5 282.5L1050.5 282.4L1052.5 283.7L1054.5 284.6L1056.5 285L1058.5 285.1L1060.5 285.8L1062.5 287.4L1064.5 289.7L1066.5 292L1068.5 291.8L1070.5 290.4L1072.5 290.1L1074.5 290.5L1076.5 291.1L1078.5 291.9L1080.5 292.8L1082.5 293.2L1084.5 291.9L1086.5 289.7L1088.5 288.8L1090.5 289.3L1092.5 289.7L1094.5 289.5L1096.5 288.9L1098.5 288.4L1100.5 288L1102.5 287.7L1104.5 287.7L1106.5 286.9L1108.5 285.4L1110.5 284.6L1112.5 279.4L1114.5 273.7L1116.5 268.3L1118.5 262L1120.5 255.9L1122.5 250.1L1124.5 244.5L1126.5 239.4L1128.5 235.7L1130.5 233.1L1132.5 231L1134.5 229L1136.5 227.8L1138.5 228.2L1140.5 229L1142.5 229.5L1144.5 229.8L1146.5 230.1L1148.5 230.2L1150.5 230.3L1152.5 230.4L1154.5 229.8L1156.5 228.3L1158.5 227.2L1160.5 228.4L1162.5 230L1164.5 230.5L1166.5 230.4L1168.5 231.1L1170.5 232.2L1172.5 233.1L1174.5 234L1176.5 234.8L1178.5 235.6L1180.5 236.1L1182.5 235.4L1184.5 233.9L1186.5 232.2L1188.5 230.7L1190.5 230.5L1192.5 231.4L1194.5 232.1L1196.5 232.1L1198.5 231.3L1200.5 229.5L1202.5 227.7L1204.5 227.6L1206.5 228.7L1208.5 231.3L1210.5 234.6L1212.5 235.8L1214.5 235.7L1216.5 237.1L1218.5 239.8L1220.5 241.6L1222.5 242.4L1224.5 242.9L1226.5 243.4L1228.5 244L1230.5 244.7L1232.5 245.6L1234.5 246.3L1236.5 246.4L1238.5 246.2L1240.5 246.2L1242.5 246.8L1244.5 247.5L1246.5 247.8L1248.5 248L1250.5 248.5L1252.5 249.9L1254.5 252.2L1256.5 255.1L1258.5 258.4L1260.5 261.7L1262.5 265.6L1264.5 269.5L1266.5 272.7L1268.5 275.2L1270.5 276.6L1272.5 277.1L1274.5 278L1276.5 279.9L1278.5 282L1280.5 284.2L1282.5 286.8L1284.5 289.8L1286.5 292.8L1288.5 295.7L1290.5 297.5L1292.5 297.8L1294.5 297.2L1296.5 296.1L1298.5 294.6L1300.5 293.2L1302.5 292.1L1304.5 291.5L1306.5 292.3L1308.5 294.2L1310.5 295.8L1312.5 297L1314.5 297.9L1316.5 298.3L1318.5 298.3L1320.5 298.2L1322.5 298.1L1324.5 298L1326.5 298L1328.5 297.8L1330.5 297.3L1332.5 296.7L1334.5 296L1336.5 296.3L1338.5 297.5L1340.5 298.1L1342.5 297.9L1344.5 297.4L1346.5 297.3L1348.5 297.6L1350.5 297.4L1352.5 295.6L1354.5 293.2L1356.5 292L1358.5 291.7L1360.5 291.7L1362.5 292.1L1364.5 293.4L1366.5 295.7L1368.5 298.9L1370.5 302.6L1372.5 306.2L1374.5 309.8L1376.5 313.7L1378.5 317.7L1380.5 321.8L1382.5 325.9L1384.5 329.5L1386.5 332.1L1388.5 333.3L1390.5 333.5L1392.5 333.1L1394.5 332.3L1396.5 331.5L1398.5 331L1400.5 331.1L1402.5 331.6L1404.5 333.2L1406.5 335.6L1408.5 338.5L1410.5 340L1412.5 338.3L1414.5 337.7L1416.5 338.6L1418.5 340.8L1420.5 342.6L1422.5 342.6L1424.5 341.9L1426.5 340.8L1428.5 339.5L1430.5 338.3L1432.5 337.4L1434.5 337.6L1436.5 338.4L1438.5 338.6L1440.5 338.4L1442.5 337.6L1444.5 335.9L1446.5 333.5L1448.5 330.3L1450.5 327.5L1452.5 327.5L1454.5 328.4L1456.5 329.7L1458.5 331L1460.5 331.9L1462.5 332.3L1464.5 334.7L1466.5 339.6L1468.5 345.3L1470.5 351L1472.5 357L1474.5 363.5L1476.5 368.8L1478.5 372.4L1480.5 376.9L1482.5 378.5L1484.5 378.5L1486.5 378.1L1488.5 378L1490.5 379.3L1492.5 380.7L1494.5 383.9L1496.5 389.7L1498.5 393.3L1500.5 397.1L1502.5 396.5L1504.5 394.9L1506.5 393.1L1508.5 388.3L1510.5 384.4L1512.5 381.5L1514.5 380L1516.5 379.7L1518.5 379L1520.5 380.2L1522.5 381L1524.5 380.9L1526.5 380.6L1528.5 380.4L1530.5 381.3L1532.5 382.4L1534.5 383.4L1536.5 384.3L1538.5 384.8L1540.5 384.6L1542.5 381.4L1544.5 378.4L1546.5 377.8L1548.5 379.9L1550.5 382.3L1552.5 382L1554.5 380.7L1556.5 380.1L1558.5 380L1560.5 379.4L1562.5 378.6L1564.5 377.9L1566.5 378.1L1568.5 379.9L1570.5 377.5L1572.5 377.7L1574.5 380.4L1576.5 384L1578.5 389.1L1580.5 394.6L1582.5 398.9L1584.5 400.9L1586.5 402.9L1588.5 403L1590.5 400.8L1592.5 396L1594.5 390.8L1596.5 386L1598.5 381.3L1600.5 377.7L1602.5 374.2L1604.5 369.6L1606.5 368.2L1608.5 369.4L1610.5 371.4L1612.5 373L1614.5 374.2L1616.5 375.2L1618.5 376.1L1620.5 376.2L1622.5 375.4L1624.5 374.3L1626.5 373.5L1627.5 373.6" stroke="#4b7f2b" stroke-width="1.7" stroke-linejoin="round"/>
<path d="M44.5 362.1L46.5 362.1L48.5 361.9L50.5 361.6L52.5 361.3L54.5 360.8L56.5 360.9L58.5 361.1L60.5 361.9L62.5 362.8L64.5 363.5L66.5 364.2L68.5 364.8L70.5 365.3L72.5 365.8L74.5 366.4L76.5 366.9L78.5 367.3L80.5 367.7L82.5 367.6L84.5 367.2L86.5 366.8L88.5 366.5L90.5 366.3L92.5 366.2L94.5 366L96.5 366.1L98.5 366.2L100.5 366.5L102.5 366.6L104.5 366.3L106.5 366L108.5 365.8L110.5 365.6L112.5 365.1L114.5 364.7L116.5 364.3L118.5 363.9L120.5 363.7L122.5 363.3L124.5 362.9L126.5 361.7L128.5 359.6L130.5 357.4L132.5 355.4L134.5 353.4L136.5 351.4L138.5 349.4L140.5 347.1L142.5 344.9L144.5 343.1L146.5 341.5L148.5 340.2L150.5 339.2L152.5 338.6L154.5 340.2L156.5 343.6L158.5 347.5L160.5 352.4L162.5 356.3L164.5 359.6L166.5 363.1L168.5 366.2L170.5 368.7L172.5 370.3L174.5 370.9L176.5 371.5L178.5 372.4L180.5 373.3L182.5 373.8L184.5 374.4L186.5 375.2L188.5 375.9L190.5 376.4L192.5 376.7L194.5 376.8L196.5 376.8L198.5 376.8L200.5 376.3L202.5 375.4L204.5 374.2L206.5 372.7L208.5 371.2L210.5 369.8L212.5 368.4L214.5 367.1L216.5 365.9L218.5 364.8L220.5 364.3L222.5 364.2L224.5 363.9L226.5 363.9L228.5 364.1L230.5 362.7L232.5 359.7L234.5 356.3L236.5 353L238.5 350.3L240.5 348.6L242.5 347.7L244.5 347.3L246.5 346.3L248.5 344.5L250.5 343L252.5 342.6L254.5 343.3L256.5 344.2L258.5 344.6L260.5 344.2L262.5 343.6L264.5 343.5L266.5 344.7L268.5 346.3L270.5 348L272.5 349.6L274.5 351.1L276.5 351.9L278.5 352.1L280.5 351.8L282.5 352.2L284.5 352.5L286.5 351.9L288.5 351.4L290.5 350.9L292.5 350.5L294.5 350.5L296.5 350.7L298.5 351.1L300.5 351.6L302.5 352.2L304.5 353.1L306.5 354L308.5 355.2L310.5 356.6L312.5 358.1L314.5 359L316.5 359.4L318.5 359.3L320.5 358.8L322.5 358.6L324.5 359.1L326.5 359.8L328.5 360.5L330.5 361.2L332.5 362.2L334.5 363.3L336.5 364.2L338.5 364.6L340.5 364.6L342.5 364.8L344.5 365.5L346.5 366.4L348.5 366.8L350.5 366.8L352.5 366.3L354.5 366L356.5 366.2L358.5 366.5L360.5 366.4L362.5 366.5L364.5 367L366.5 367.7L368.5 368.2L370.5 368.3L372.5 368.1L374.5 367.8L376.5 367.8L378.5 367.9L380.5 368L382.5 368L384.5 367.8L386.5 367.5L388.5 367.1L390.5 366.7L392.5 366.2L394.5 365.5L396.5 364.8L398.5 365.7L400.5 367.3L402.5 369.1L404.5 370.9L406.5 372.8L408.5 374.7L410.5 376.6L412.5 378.4L414.5 380.2L416.5 382.3L418.5 384.9L420.5 387L422.5 388.1L424.5 388.3L426.5 388.2L428.5 388.5L430.5 388.7L432.5 388.4L434.5 387.8L436.5 387.7L438.5 387.6L440.5 386.5L442.5 385.8L444.5 386.4L446.5 388.5L448.5 391.5L450.5 394.6L452.5 396.9L454.5 399.1L456.5 402L458.5 405.2L460.5 408.3L462.5 410.7L464.5 412.6L466.5 413.9L468.5 414.8L470.5 415.5L472.5 415.8L474.5 416L476.5 416.1L478.5 416.3L480.5 416.5L482.5 416.8L484.5 417.4L486.5 418.6L488.5 419.9L490.5 419.5L492.5 418.7L494.5 417.9L496.5 417.2L498.5 416.6L500.5 416.2L502.5 416L504.5 416.1L506.5 416.6L508.5 416.8L510.5 416.7L512.5 416.2L514.5 415.4L516.5 414.4L518.5 413.3L520.5 413L522.5 413.8L524.5 415.2L526.5 417.2L528.5 419L530.5 420.4L532.5 421.4L534.5 421.6L536.5 421.2L538.5 421.1L540.5 421.5L542.5 422.2L544.5 423.2L546.5 423.8L548.5 424L550.5 423.9L552.5 424.1L554.5 424.4L556.5 424.9L558.5 428L560.5 426.9L562.5 422.6L564.5 418.9L566.5 415.2L568.5 410.7L570.5 407.5L572.5 405.2L574.5 403L576.5 401.4L578.5 400.6L580.5 399.8L582.5 398.6L584.5 396.9L586.5 395.1L588.5 393.1L590.5 391.7L592.5 391L594.5 390.9L596.5 390.4L598.5 389.3L600.5 387.9L602.5 386.2L604.5 384.1L606.5 381L608.5 378.1L610.5 376.5L612.5 376.3L614.5 376.2L616.5 374.8L618.5 373.3L620.5 373.1L622.5 372.9L624.5 372.3L626.5 371.6L628.5 370.8L630.5 369.9L632.5 368.2L634.5 364.1L636.5 358.5L638.5 352.8L640.5 349L642.5 346.4L644.5 344L646.5 341.7L648.5 340.4L650.5 340.1L652.5 339.8L654.5 339.6L656.5 339.2L658.5 338.7L660.5 338.2L662.5 337.4L664.5 336.6L666.5 336L668.5 335.6L670.5 335.4L672.5 335.1L674.5 334.9L676.5 334.4L678.5 333.5L680.5 332.3L682.5 331.4L684.5 330.6L686.5 330.1L688.5 329.9L690.5 330L692.5 332L694.5 337.5L696.5 342L698.5 344.9L700.5 347.1L702.5 348L704.5 346.8L706.5 345.7L708.5 344.9L710.5 343.4L712.5 341.8L714.5 341.1L716.5 340.6L718.5 339.8L720.5 338.9L722.5 337.9L724.5 336.5L726.5 334.6L728.5 332.4L730.5 330.6L732.5 330.7L734.5 331.6L736.5 332.9L738.5 333.9L740.5 334.6L742.5 334.9L744.5 335.1L746.5 335.3L748.5 335.3L750.5 335.2L752.5 335L754.5 334.8L756.5 334.6L758.5 334.4L760.5 334.2L762.5 334.4L764.5 334.8L766.5 335.1L768.5 334.9L770.5 334.4L772.5 333.5L774.5 332.2L776.5 330.7L778.5 329.2L780.5 327.6L782.5 326.1L784.5 324.4L786.5 322.5L788.5 320.8L790.5 319.4L792.5 318.2L794.5 317.5L796.5 317.2L798.5 317.5L800.5 318.8L802.5 320.4L804.5 322.3L806.5 324.3L808.5 326.3L810.5 328.4L812.5 330.2L814.5 331.6L816.5 332.7L818.5 333.7L820.5 334.8L822.5 335.8L824.5 336.7L826.5 337.4L828.5 337.8L830.5 337.8L832.5 337.5L834.5 337.3L836.5 337.6L838.5 338.2L840.5 338.9L842.5 339.9L844.5 341.1L846.5 342.2L848.5 343L850.5 343.6L852.5 343.9L854.5 344.3L856.5 344.7L858.5 345L860.5 345.3L862.5 345.6L864.5 345.8L866.5 345.9L868.5 346.1L870.5 346.2L872.5 346.4L874.5 346.8L876.5 347.4L878.5 347.7L880.5 347.4L882.5 346.4L884.5 345.6L886.5 344.9L888.5 344.5L890.5 344.1L892.5 343.9L894.5 343.7L896.5 343.6L898.5 343.6L900.5 343.8L902.5 344.3L904.5 345.5L906.5 347.1L908.5 348.3L910.5 348.9L912.5 349L914.5 348.7L916.5 348.2L918.5 347.4L920.5 346.8L922.5 346.2L924.5 345.8L926.5 345.5L928.5 345.3L930.5 344.9L932.5 344L934.5 343.1L936.5 342.6L938.5 342.9L940.5 344.3L942.5 346.2L944.5 348.1L946.5 349.3L948.5 350.1L950.5 350.6L952.5 351.1L954.5 351.6L956.5 352L958.5 352.3L960.5 352.6L962.5 352.8L964.5 352.9L966.5 352.7L968.5 351.5L970.5 350.3L972.5 349.4L974.5 348.7L976.5 348L978.5 347L980.5 346L982.5 344.8L984.5 343.5L986.5 342.2L988.5 340.9L990.5 339.6L992.5 338.1L994.5 336.3L996.5 334.8L998.5 333.4L1000.5 331.5L1002.5 329L1004.5 326.7L1006.5 324.4L1008.5 322.2L1010.5 319.9L1012.5 317.7L1014.5 315.2L1016.5 312.5L1018.5 309.6L1020.5 306.5L1022.5 304L1024.5 301.9L1026.5 300.1L1028.5 298.5L1030.5 297L1032.5 295.7L1034.5 294.5L1036.5 293.4L1038.5 292.3L1040.5 291L1042.5 289.8L1044.5 288.6L1046.5 287.5L1048.5 286.5L1050.5 285.8L1052.5 285.9L1054.5 286L1056.5 285.9L1058.5 285.8L1060.5 286.1L1062.5 286.7L1064.5 287.9L1066.5 289.2L1068.5 289.6L1070.5 289.3L1072.5 289.3L1074.5 289.6L1076.5 290L1078.5 290.6L1080.5 291.2L1082.5 291.6L1084.5 291.3L1086.5 290.4L1088.5 289.8L1090.5 289.9L1092.5 290L1094.5 289.9L1096.5 289.5L1098.5 289.2L1100.5 288.9L1102.5 288.6L1104.5 288.5L1106.5 288L1108.5 287.1L1110.5 286.5L1112.5 283.8L1114.5 280.5L1116.5 277L1118.5 272.7L1120.5 268.3L1122.5 263.7L1124.5 259L1126.5 254.4L1128.5 250.4L1130.5 246.9L1132.5 243.8L1134.5 240.9L1136.5 238.5L1138.5 237.1L1140.5 236.1L1142.5 235.2L1144.5 234.5L1146.5 233.9L1148.5 233.4L1150.5 232.9L1152.5 232.6L1154.5 231.9L1156.5 230.9L1158.5 230L1160.5 230.1L1162.5 230.6L1164.5 230.7L1166.5 230.7L1168.5 230.9L1170.5 231.5L1172.5 232L1174.5 232.6L1176.5 233.2L1178.5 233.8L1180.5 234.3L1182.5 234.3L1184.5 233.8L1186.5 233L1188.5 232.2L1190.5 231.8L1192.5 232.1L1194.5 232.3L1196.5 232.3L1198.5 231.9L1200.5 231L1202.5 229.9L1204.5 229.5L1206.5 229.7L1208.5 230.8L1210.5 232.4L1212.5 233.3L1214.5 233.6L1216.5 234.6L1218.5 236.2L1220.5 237.6L1222.5 238.6L1224.5 239.4L1226.5 240.2L1228.5 240.9L1230.5 241.7L1232.5 242.6L1234.5 243.4L1236.5 243.9L1238.5 244.2L1240.5 244.5L1242.5 245L1244.5 245.6L1246.5 246.1L1248.5 246.4L1250.5 246.9L1252.5 247.8L1254.5 249.1L1256.5 251L1258.5 253.1L1260.5 255.5L1262.5 258.2L1264.5 261.2L1266.5 263.9L1268.5 266.4L1270.5 268.4L1272.5 269.9L1274.5 271.4L1276.5 273.3L1278.5 275.3L1280.5 277.3L1282.5 279.6L1284.5 282.1L1286.5 284.6L1288.5 287.3L1290.5 289.4L1292.5 290.8L1294.5 291.6L1296.5 291.9L1298.5 291.9L1300.5 291.7L1302.5 291.4L1304.5 291.2L1306.5 291.6L1308.5 292.6L1310.5 293.6L1312.5 294.5L1314.5 295.3L1316.5 295.9L1318.5 296.3L1320.5 296.5L1322.5 296.7L1324.5 296.9L1326.5 297.1L1328.5 297.1L1330.5 297L1332.5 296.8L1334.5 296.4L1336.5 296.5L1338.5 297L1340.5 297.4L1342.5 297.4L1344.5 297.2L1346.5 297.2L1348.5 297.4L1350.5 297.3L1352.5 296.5L1354.5 295.2L1356.5 294.4L1358.5 293.9L1360.5 293.6L1362.5 293.4L1364.5 293.8L1366.5 294.8L1368.5 296.4L1370.5 298.5L1372.5 300.8L1374.5 303.3L1376.5 306.1L1378.5 309.1L1380.5 312.3L1382.5 315.7L1384.5 318.9L1386.5 321.8L1388.5 323.9L1390.5 325.5L1392.5 326.5L1394.5 327.2L1396.5 327.6L1398.5 328L1400.5 328.5L1402.5 329.1L1404.5 330.2L1406.5 331.8L1408.5 333.7L1410.5 335.2L1412.5 335.1L1414.5 335.3L1416.5 336.1L1418.5 337.5L1420.5 338.8L1422.5 339.4L1424.5 339.6L1426.5 339.4L1428.5 339.1L1430.5 338.6L1432.5 338.1L1434.5 338.1L1436.5 338.4L1438.5 338.5L1440.5 338.4L1442.5 338L1444.5 337.2L1446.5 335.9L1448.5 334L1450.5 332.1L1452.5 331.4L1454.5 331.3L1456.5 331.4L1458.5 331.7L1460.5 332L1462.5 332.2L1464.5 333.3L1466.5 335.8L1468.5 339L1470.5 342.6L1472.5 346.6L1474.5 351.2L1476.5 355.6L1478.5 359.3L1480.5 363.4L1482.5 366.2L1484.5 368.1L1486.5 369.5L1488.5 370.8L1490.5 372.5L1492.5 374.2L1494.5 376.6L1496.5 380.4L1498.5 383.6L1500.5 386.8L1502.5 388.1L1504.5 388.7L1506.5 388.8L1508.5 387.2L1510.5 385.6L1512.5 384.1L1514.5 383L1516.5 382.4L1518.5 381.6L1520.5 381.8L1522.5 381.9L1524.5 381.7L1526.5 381.4L1528.5 381.2L1530.5 381.5L1532.5 382L1534.5 382.5L1536.5 383.1L1538.5 383.5L1540.5 383.6L1542.5 382.3L1544.5 380.7L1546.5 380.1L1548.5 380.7L1550.5 381.7L1552.5 381.7L1554.5 381.1L1556.5 380.8L1558.5 380.6L1560.5 380.3L1562.5 379.8L1564.5 379.3L1566.5 379.1L1568.5 379.8L1570.5 378.7L1572.5 378.6L1574.5 379.7L1576.5 381.5L1578.5 384.2L1580.5 387.5L1582.5 390.6L1584.5 392.8L1586.5 395L1588.5 396.3L1590.5 396.3L1592.5 394.7L1594.5 392.6L1596.5 390L1598.5 387.2L1600.5 384.7L1602.5 382L1604.5 378.7L1606.5 376.6L1608.5 375.9L1610.5 375.8L1612.5 375.9L1614.5 376L1616.5 376.1L1618.5 376.4L1620.5 376.4L1622.5 376L1624.5 375.4L1626.5 374.9L1627.5 374.8" stroke="#2340e8" stroke-width="2.1" stroke-linejoin="round"/>
<path d="M140.7 300.3L265.1 322.5" stroke="#5fa83a" stroke-width="2" stroke-linecap="butt"/>
<path d="M168.7 399.4L468.4 440.5" stroke="#5fa83a" stroke-width="2" stroke-linecap="butt"/>
<path d="M552.9 488.8L702.2 390.6" stroke="#f57a4c" stroke-width="2" stroke-linecap="butt"/>
<path d="M821 359.5L955.2 374.3" stroke="#5fa83a" stroke-width="2" stroke-linecap="butt"/>
<path d="M1355.7 262.2L1452.2 304.4" stroke="#f57a4c" stroke-width="2" stroke-linecap="butt"/>
</g>
<g clip-path="url(#ci)" fill="none">
<path d="M44 793.5H1628" stroke="#6a6a6a" stroke-width="1.1" stroke-dasharray="7 4"/>
<path d="M44.5 783.5L46.5 784.4L48.5 785.7L50.5 786.6L52.5 786.7L54.5 786.1L56.5 785.7L58.5 786.4L60.5 788.3L62.5 792.2L64.5 796.8L66.5 799.5L68.5 800.9L70.5 801.4L72.5 801.9L74.5 802.3L76.5 802.7L78.5 803.4L80.5 803.8L82.5 802.7L84.5 800.4L86.5 797.8L88.5 795.2L90.5 792.8L92.5 791.7L94.5 791.4L96.5 791.8L98.5 792.9L100.5 794.4L102.5 794.6L104.5 793.8L106.5 792.5L108.5 791.9L110.5 791.4L112.5 790.3L114.5 788.9L116.5 788L118.5 787.6L120.5 787.3L122.5 787L124.5 786.4L126.5 784.4L128.5 779.2L130.5 773.7L132.5 768.3L134.5 763.8L136.5 760.1L138.5 757L140.5 754.3L142.5 752.1L144.5 751L146.5 750.7L148.5 751.5L150.5 753.4L152.5 758.7L154.5 769.8L156.5 785.5L158.5 802.8L160.5 819.5L162.5 831.8L164.5 840.9L166.5 847.7L168.5 852.1L170.5 853.3L172.5 850.4L174.5 844.5L176.5 838L178.5 832.1L180.5 827.7L182.5 824.1L184.5 821L186.5 818.1L188.5 815.4L190.5 812.8L192.5 810.3L194.5 807.8L196.5 805.1L198.5 802.5L200.5 799.5L202.5 796.3L204.5 792.9L206.5 788.5L208.5 783.4L210.5 779.2L212.5 776L214.5 773.4L216.5 771.2L218.5 770.4L220.5 771.5L222.5 773.6L224.5 775.9L226.5 778.9L228.5 781.6L230.5 781L232.5 776.6L234.5 768.6L236.5 760.3L238.5 753.2L240.5 749.8L242.5 751L244.5 755.2L246.5 757.6L248.5 758.4L250.5 760.7L252.5 764.5L254.5 769.3L256.5 774.6L258.5 779.9L260.5 783L262.5 784.3L264.5 787.3L266.5 791.9L268.5 797.2L270.5 802.7L272.5 807.6L274.5 811.4L276.5 813.5L278.5 812.6L280.5 810L282.5 806.8L284.5 803.9L286.5 801.4L288.5 798.9L290.5 796.2L292.5 793.8L294.5 792.6L296.5 792.5L298.5 793.8L300.5 795.9L302.5 797.8L304.5 799.5L306.5 801.4L308.5 804.3L310.5 807.5L312.5 810.6L314.5 812.6L316.5 812.9L318.5 810.9L320.5 807.6L322.5 804.1L324.5 802.7L326.5 802.5L328.5 802.9L330.5 803.5L332.5 804.7L334.5 806.6L336.5 808.5L338.5 808.7L340.5 807.9L342.5 806.2L344.5 805.6L346.5 806.2L348.5 807.5L350.5 806.9L352.5 804.4L354.5 801.8L356.5 800L358.5 799.5L360.5 799.1L362.5 798.8L364.5 799.1L366.5 800.2L368.5 801.5L370.5 801.8L372.5 801.2L374.5 799.5L376.5 796.9L378.5 794.6L380.5 793.9L382.5 793.6L384.5 793.1L386.5 792.4L388.5 791.4L390.5 790.3L392.5 788.9L394.5 786.8L396.5 785.4L398.5 787.1L400.5 791.6L402.5 797.9L404.5 804.7L406.5 811.2L408.5 816.9L410.5 821.5L412.5 824.8L414.5 827.5L416.5 829.9L418.5 833L420.5 835.6L422.5 834.9L424.5 831.3L426.5 826.5L428.5 822.2L430.5 817.8L432.5 812.3L434.5 806.3L436.5 800.8L438.5 797.9L440.5 794.8L442.5 792.5L444.5 794L446.5 799.3L448.5 807.3L450.5 816.7L452.5 824.2L454.5 830.2L456.5 835.7L458.5 840.8L460.5 844.6L462.5 846.4L464.5 846.3L466.5 844.4L468.5 840.1L470.5 834.3L472.5 828.1L474.5 822.9L476.5 818.6L478.5 814.8L480.5 811.4L482.5 808.2L484.5 807.5L486.5 808.9L488.5 808.4L490.5 805.4L492.5 801.7L494.5 797.9L496.5 794.4L498.5 791.5L500.5 789.7L502.5 788.9L504.5 788.7L506.5 789.1L508.5 789.6L510.5 790.1L512.5 790.5L514.5 789.6L516.5 787.5L518.5 784.8L520.5 784.1L522.5 786.1L524.5 790.4L526.5 796L528.5 802L530.5 807.5L532.5 811.6L534.5 812.7L536.5 810.6L538.5 808.2L540.5 807.2L542.5 807.5L544.5 808.5L546.5 808.2L548.5 806.7L550.5 804.6L552.5 803.3L554.5 802.8L556.5 801.8L558.5 804.1L560.5 808.7L562.5 801.8L564.5 790.7L566.5 777.3L568.5 763.4L570.5 752.2L572.5 745L574.5 740.9L576.5 740.5L578.5 743.1L580.5 746.6L582.5 750.1L584.5 752.8L586.5 754.1L588.5 754.3L590.5 755.1L592.5 757.2L594.5 760.2L596.5 763.5L598.5 765L600.5 764.8L602.5 763.3L604.5 760.6L606.5 755.5L608.5 750.3L610.5 747.9L612.5 751.2L614.5 757.1L616.5 760L618.5 762L620.5 765.4L622.5 768.7L624.5 771.7L626.5 774.1L628.5 775.1L630.5 774.8L632.5 772.6L634.5 764.9L636.5 750.9L638.5 737.1L640.5 727.3L642.5 721.9L644.5 721.1L646.5 724L648.5 730.1L650.5 737.9L652.5 746.3L654.5 753.9L656.5 760.5L658.5 765.7L660.5 769.7L662.5 772L664.5 772.9L666.5 774L668.5 775.3L670.5 776.8L672.5 778.3L674.5 779.7L676.5 780.7L678.5 780.9L680.5 779.5L682.5 778.6L684.5 778.4L686.5 778.6L688.5 779.1L690.5 780.9L692.5 785L694.5 793.8L696.5 808.5L698.5 820.9L700.5 829L702.5 832.4L704.5 830.7L706.5 824.9L708.5 816L710.5 806.2L712.5 796.5L714.5 790.3L716.5 787.1L718.5 784.5L720.5 782.1L722.5 779.6L724.5 776.9L726.5 773.6L728.5 769.8L730.5 767.7L732.5 769.6L734.5 774.4L736.5 780.7L738.5 785.6L740.5 789.6L742.5 792.5L744.5 794.7L746.5 795.9L748.5 795.8L750.5 795L752.5 794L754.5 793.1L756.5 792L758.5 790.8L760.5 790.2L762.5 790.5L764.5 791.2L766.5 792.1L768.5 792.2L770.5 791.1L772.5 788.9L774.5 785.6L776.5 781.7L778.5 778.2L780.5 775.4L782.5 771.9L784.5 768.4L786.5 765.3L788.5 762.8L790.5 761.6L792.5 761.3L794.5 762.2L796.5 764.2L798.5 767.8L800.5 773.5L802.5 782.2L804.5 791.3L806.5 798.2L808.5 805L810.5 812.2L812.5 817.1L814.5 820L816.5 821.4L818.5 821.6L820.5 821.1L822.5 820.2L824.5 819.1L826.5 817.9L828.5 816.3L830.5 813.9L832.5 811.3L834.5 808.7L836.5 806.9L838.5 805.9L840.5 806.1L842.5 807.5L844.5 809.3L846.5 810.7L848.5 811.3L850.5 811.2L852.5 810.6L854.5 809.4L856.5 807.8L858.5 806.6L860.5 805.8L862.5 804.9L864.5 804L866.5 802.9L868.5 801.8L870.5 800.7L872.5 800L874.5 800.3L876.5 801.3L878.5 801.7L880.5 800.2L882.5 797.5L884.5 795L886.5 792.7L888.5 791L890.5 789.9L892.5 789.1L894.5 788.9L896.5 789.5L898.5 790.5L900.5 791.3L902.5 791.9L904.5 793.2L906.5 797.4L908.5 801.8L910.5 804.9L912.5 805.2L914.5 803.4L916.5 800L918.5 796L920.5 792.4L922.5 789.9L924.5 788.6L926.5 789.1L928.5 790.1L930.5 789.5L932.5 787.8L934.5 786L936.5 785.9L938.5 787.2L940.5 790.7L942.5 795.8L944.5 801.6L946.5 806L948.5 808.6L950.5 809.4L952.5 808.5L954.5 807L956.5 806.1L958.5 805.3L960.5 804.3L962.5 803L964.5 801.7L966.5 800.3L968.5 798.1L970.5 794.4L972.5 790.2L974.5 787L976.5 784.5L978.5 782.3L980.5 779.9L982.5 777.4L984.5 774.7L986.5 772.7L988.5 772.1L990.5 771.3L992.5 769.5L994.5 767.1L996.5 765.2L998.5 763.3L1000.5 760.5L1002.5 757.2L1004.5 753.9L1006.5 751.2L1008.5 748.8L1010.5 747.1L1012.5 745.8L1014.5 744.5L1016.5 742.4L1018.5 739.8L1020.5 737L1022.5 736L1024.5 737L1026.5 738.7L1028.5 740.9L1030.5 743.3L1032.5 746.5L1034.5 750L1036.5 753.6L1038.5 756.9L1040.5 759.5L1042.5 760.9L1044.5 761.6L1046.5 762.2L1048.5 763.3L1050.5 764.8L1052.5 767.9L1054.5 771.7L1056.5 775L1058.5 778.1L1060.5 781.2L1062.5 784.6L1064.5 790L1066.5 795.5L1068.5 798.1L1070.5 798.7L1072.5 799.2L1074.5 799.7L1076.5 800.1L1078.5 800.6L1080.5 801.4L1082.5 802.1L1084.5 801L1086.5 797.5L1088.5 793.8L1090.5 791.7L1092.5 791.2L1094.5 790.7L1096.5 790.5L1098.5 790.7L1100.5 790.5L1102.5 789.8L1104.5 789.6L1106.5 789L1108.5 787.4L1110.5 786.1L1112.5 784.5L1114.5 776.7L1116.5 766.3L1118.5 755L1120.5 743.5L1122.5 732.3L1124.5 722.2L1126.5 714.7L1128.5 710.3L1130.5 708.4L1132.5 708.4L1134.5 709.9L1136.5 712.7L1138.5 717.2L1140.5 723.2L1142.5 730.3L1144.5 737.8L1146.5 745.3L1148.5 752.1L1150.5 758.2L1152.5 763.8L1154.5 768.5L1156.5 770.8L1158.5 772.1L1160.5 774.7L1162.5 778.5L1164.5 781.3L1166.5 783.2L1168.5 785.6L1170.5 788.6L1172.5 791.5L1174.5 793.9L1176.5 796.1L1178.5 798.5L1180.5 800.2L1182.5 799.9L1184.5 798.1L1186.5 795.1L1188.5 791.9L1190.5 789.6L1192.5 789.6L1194.5 790.1L1196.5 790.6L1198.5 790L1200.5 788.2L1202.5 786.3L1204.5 785.6L1206.5 786.3L1208.5 789.2L1210.5 794L1212.5 797.5L1214.5 799.3L1216.5 802.4L1218.5 806.5L1220.5 810.8L1222.5 813.4L1224.5 814.3L1226.5 814.4L1228.5 814.1L1230.5 813.4L1232.5 812.3L1234.5 811.3L1236.5 810.7L1238.5 809.8L1240.5 808.3L1242.5 807.2L1244.5 807.1L1246.5 806.5L1248.5 805.5L1250.5 805.3L1252.5 806L1254.5 808.4L1256.5 811.7L1258.5 815.7L1260.5 820.3L1262.5 825.7L1264.5 831.5L1266.5 836.6L1268.5 840.7L1270.5 842.5L1272.5 842.5L1274.5 840.8L1276.5 838.7L1278.5 838.4L1280.5 837.7L1282.5 837.3L1284.5 838.5L1286.5 840.8L1288.5 843.2L1290.5 844.4L1292.5 844L1294.5 841.8L1296.5 837.1L1298.5 830.8L1300.5 823.8L1302.5 817.4L1304.5 812.2L1306.5 808.5L1308.5 807.1L1310.5 807.3L1312.5 807.4L1314.5 807.5L1316.5 807.7L1318.5 808L1320.5 807.5L1322.5 806.4L1324.5 804.9L1326.5 803.9L1328.5 803L1330.5 801.9L1332.5 800.4L1334.5 798.6L1336.5 796.6L1338.5 795.7L1340.5 795.7L1342.5 795.7L1344.5 795.7L1346.5 796.1L1348.5 796.7L1350.5 796.6L1352.5 795.5L1354.5 792.8L1356.5 790.3L1358.5 788.3L1360.5 786.8L1362.5 786.2L1364.5 787.2L1366.5 789.5L1368.5 792.8L1370.5 797.8L1372.5 805.1L1374.5 813.2L1376.5 821.7L1378.5 830.3L1380.5 837.6L1382.5 843.6L1384.5 848.4L1386.5 852L1388.5 852.8L1390.5 851.3L1392.5 847.2L1394.5 841.7L1396.5 835.5L1398.5 830.1L1400.5 825.5L1402.5 821.6L1404.5 818.8L1406.5 818.4L1408.5 820L1410.5 821.6L1412.5 819L1414.5 815.7L1416.5 814.1L1418.5 814.6L1420.5 815.8L1422.5 816.1L1424.5 815.3L1426.5 813.2L1428.5 810.2L1430.5 806.6L1432.5 802.5L1434.5 799.8L1436.5 799L1438.5 798.2L1440.5 797.4L1442.5 796.1L1444.5 794.3L1446.5 790.4L1448.5 785.1L1450.5 780L1452.5 778.1L1454.5 778.8L1456.5 780.7L1458.5 783.2L1460.5 785.8L1462.5 788.2L1464.5 791.3L1466.5 798L1468.5 807.1L1470.5 817.7L1472.5 829.3L1474.5 841.4L1476.5 851.5L1478.5 858.6L1480.5 863.6L1482.5 864.5L1484.5 862.2L1486.5 857.5L1488.5 852.7L1490.5 848.6L1492.5 845.7L1494.5 842.9L1496.5 842.5L1498.5 844.8L1500.5 848.3L1502.5 848.5L1504.5 846.3L1506.5 842.6L1508.5 833.4L1510.5 822L1512.5 810.4L1514.5 801.1L1516.5 794.5L1518.5 790.1L1520.5 788.8L1522.5 788.4L1524.5 788.5L1526.5 788.6L1528.5 788.5L1530.5 789.5L1532.5 791.7L1534.5 793.9L1536.5 795.9L1538.5 797.4L1540.5 797.6L1542.5 795.4L1544.5 790.8L1546.5 787.4L1548.5 786.9L1550.5 789L1552.5 791.6L1554.5 791.9L1556.5 791.4L1558.5 790.8L1560.5 789.8L1562.5 788.4L1564.5 787L1566.5 786.7L1568.5 786.2L1570.5 786L1572.5 786.5L1574.5 789L1576.5 794.2L1578.5 802.6L1580.5 812.8L1582.5 822.2L1584.5 828.9L1586.5 832.8L1588.5 833.7L1590.5 830.6L1592.5 823.4L1594.5 813.1L1596.5 801.2L1598.5 790.1L1600.5 780L1602.5 770.2L1604.5 762L1606.5 757.3L1608.5 756.6L1610.5 759.2L1612.5 763.1L1614.5 767.4L1616.5 771.5L1618.5 775.4L1620.5 778.7L1622.5 781.2L1624.5 782.5L1626.5 783.3" stroke="#2f8f2f" stroke-width="1.1" stroke-dasharray="4.6 3"/>
<path d="M44.3 783.2C44.7 783.9 46.7 787.6 47.6 788.2C48.4 788.8 49.8 788.7 50.8 788.2C51.7 787.7 54 783.8 55.1 783.9C56.2 784 58.3 786.6 59.4 789.3C60.5 792 62.4 803.9 63.7 805.5C65.1 807.1 68.7 802.5 70.2 802.2C71.7 802 74.4 802.9 75.6 803.3C76.8 803.7 78.9 806.4 79.9 805.5C81 804.5 83 797.9 84.2 795.8C85.5 793.6 88.3 788.7 89.6 788.2C91 787.7 93.7 790.3 95 791.4C96.4 792.6 99.1 797.7 100.4 797.5C101.8 797.3 104.8 790.5 105.8 789.7C106.9 789 108 791.9 109.1 791.4C110.1 791 113.1 786.6 114.5 786.1C115.8 785.5 118.5 787.3 119.9 787.1C121.2 787 124.2 787.4 125.3 785C126.3 782.5 127.6 771.2 128.5 767.7C129.4 764.2 131.7 758.8 132.8 756.9C133.9 755 136.1 753.7 137.1 752.6C138.2 751.5 140.2 748.1 141.4 747.8C142.7 747.6 145.6 749 146.8 750.4C148.1 751.8 150.3 755.3 151.2 759.1C152 762.8 152.6 773.1 153.3 780.7C154 788.2 155.7 810.9 156.6 819.5C157.4 828.1 158.8 845 159.8 849.7C160.7 854.4 163.2 855.8 164.1 857.3C165.1 858.8 166.5 862 167.3 861.6C168.2 861.2 169.8 857.4 170.6 854C171.4 850.7 173 838.5 173.8 834.6C174.6 830.7 176 824.9 177.1 822.7C178.1 820.6 181.1 818.8 182.5 817.3C183.8 815.9 186.5 812.5 187.9 810.9C189.2 809.3 191.9 806.2 193.2 804.4C194.6 802.6 197.3 799 198.6 796.8C200 794.7 202.8 790.1 204 787.1C205.3 784.2 207.3 775.3 208.4 773.1C209.4 770.9 211.6 770.7 212.7 769.9C213.8 769.1 215.9 765.8 217 766.6C218.1 767.4 220.4 774.6 221.3 776.3C222.3 778.1 223.7 779.2 224.5 780.7C225.4 782.1 227 788.7 227.8 788.2C228.6 787.7 230.2 780.8 231 776.3C231.8 771.9 233.4 757.2 234.3 752.6C235.1 748 236.7 740.6 237.5 739.6C238.3 738.7 239.9 741.9 240.7 745C241.5 748.1 243 762.7 244 764.5C244.9 766.2 247.2 758 248.3 759.1C249.4 760.1 251.4 769.2 252.6 773.1C253.8 777 256.8 788.7 258 790.4C259.2 792 261.2 784.6 262.3 786.1C263.4 787.5 265.6 798.6 266.6 802.2C267.7 805.9 269.9 813 271 815.2C272 817.3 274.2 820.6 275.3 819.5C276.3 818.4 278.8 808.8 279.6 806.6C280.4 804.3 280.8 802.5 281.7 801.2C282.7 799.8 285.9 797.2 287.1 795.8C288.4 794.3 290.4 789.8 291.5 789.3C292.5 788.7 294.7 790.1 295.8 791.4C296.9 792.8 298.9 798.6 300.1 800.1C301.3 801.6 304.4 802 305.5 803.3C306.6 804.7 307.8 809.3 308.6 810.9C309.4 812.5 311.1 815.6 311.9 816.3C312.7 816.9 314.3 817.5 315.1 816.3C315.9 815.1 317.5 808.9 318.3 806.6C319.2 804.2 320.6 797.8 321.6 797.3C322.5 796.7 324.7 801.2 325.9 802.2C327.1 803.3 330.1 804.2 331.3 805.5C332.5 806.8 334.5 812.5 335.6 812.6C336.7 812.7 339 807.9 339.9 806.6C340.8 805.3 342.1 802.2 342.7 802.2C343.4 802.2 344.6 805.5 345.3 806.6C346.1 807.6 347.8 811.2 348.6 810.4C349.4 809.6 351 801.9 351.8 800.1C352.6 798.2 354.2 795.9 355 795.8C355.8 795.6 357.3 798.7 358.3 799C359.2 799.3 361.4 797.2 362.6 797.9C363.8 798.6 366.8 804.1 368 804.4C369.2 804.7 371.1 801.9 372.3 800.1C373.5 798.2 376.2 790.5 377.3 789.7C378.4 788.9 379.8 793.4 380.9 793.6C382.1 793.8 385 791.8 386.3 791C387.7 790.2 390.6 788.4 391.7 787.1C392.9 785.8 394.6 780.2 395.4 780.7C396.2 781.1 397.5 787.1 398.2 790.4C399 793.6 400.6 802.9 401.4 806.6C402.3 810.2 403.7 816.7 404.7 819.5C405.6 822.3 407.9 827.7 409 829.2C410.1 830.7 412.4 830.7 413.3 831.4C414.3 832.1 415.8 833.3 416.6 834.6C417.3 836 418.7 842.2 419.4 842.2C420 842.2 421.2 837.4 422 834.6C422.7 831.8 424.2 822.3 425.2 819.5C426.1 816.7 428.6 814.4 429.5 812C430.5 809.5 432 802.8 432.7 800.1C433.5 797.4 434.9 791.2 435.5 790.4C436.2 789.6 437.4 794.1 438.1 793.6C438.9 793.1 440.7 786.1 441.4 786.1C442.1 786.1 442.9 790.2 443.5 793.6C444.2 797 446 807.9 446.8 813C447.6 818.2 449.2 831.4 450 834.6C450.8 837.9 452.4 837.4 453.2 838.9C454.1 840.4 455.8 844.8 456.5 846.5C457.2 848.2 458.3 852 459.1 852.3C459.9 852.6 462.1 850 463 848.6C463.9 847.2 465.4 843.9 466.2 841.1C467 838.3 468.6 829.2 469.4 826C470.2 822.7 471.7 817.2 472.7 815.2C473.6 813.2 475.8 811.5 477 809.8C478.2 808.1 481.2 801.4 482.4 801.8C483.6 802.2 485.8 813.2 486.7 813C487.6 812.8 489.1 802.6 489.9 800.1C490.8 797.5 492.2 794.3 493.2 792.5C494.1 790.8 496.4 786.7 497.5 786.1C498.6 785.4 500.6 786.6 501.8 787.1C503 787.7 505.9 789.8 507.2 790.4C508.6 790.9 511.5 792.3 512.6 791.4C513.7 790.6 515.1 785.5 515.8 783.9C516.6 782.3 518 778.7 518.6 778.9C519.3 779.2 520.5 783.4 521.2 786.1C522 788.7 523.7 796.8 524.5 800.1C525.3 803.3 526.9 809.5 527.7 812C528.5 814.4 530.3 818.7 531 819.5C531.6 820.3 532.4 820.2 533.1 818.4C533.8 816.7 535.7 807.4 536.3 805.5C537 803.6 537.8 803 538.5 803.3C539.2 803.6 541 806.7 541.7 807.6C542.5 808.6 543.9 811.1 544.5 810.9C545.2 810.6 546.4 806.8 547.1 805.5C547.9 804.1 549.6 800.5 550.4 800.1C551.2 799.7 552.9 802.3 553.6 802.2C554.4 802.2 555.9 799.2 556.4 799.4C557 799.7 557.6 801.1 557.9 804.4C558.3 807.7 559 827.3 559.4 826C559.9 824.6 561 800.9 561.6 793.6C562.2 786.3 563.7 774.4 564.4 767.7C565.2 761 566.9 744.2 567.6 739.6C568.4 735.1 569.6 731.7 570.5 731C571.4 730.3 573.9 732.1 574.8 734.2C575.8 736.4 577.3 745.6 578.1 748.3C578.9 751 580.5 754.6 581.3 755.8C582.1 757 583.6 758.3 584.5 758C585.5 757.7 587.9 753.3 588.9 753.7C589.8 754.1 591.1 759.2 592.1 761.2C593 763.3 595.3 770 596.4 770.3C597.5 770.6 599.8 765.1 600.7 763.4C601.7 761.7 603.2 759.7 604 756.9C604.8 754.1 606.4 742.6 607.2 740.7C608 738.8 609.2 738.3 610 741.8C610.8 745.3 612.8 766.1 613.7 768.8C614.6 771.5 616.5 763 617.3 763.4C618.2 763.8 619.1 770.1 620.1 772C621.2 774 624.3 778.5 625.5 778.9C626.8 779.3 628.9 776.9 629.9 775.3C630.8 773.6 632.4 770.8 633.1 765.5C633.8 760.3 634.7 739.6 635.3 733.2C635.8 726.7 636.8 716.8 637.4 713.7C638 710.7 639.5 709 640.2 709C640.9 709 642.1 711.3 642.8 713.7C643.5 716.2 645.2 724.5 646.1 728.9C646.9 733.2 648.5 744 649.3 748.3C650.1 752.6 651.7 760.4 652.5 763.4C653.3 766.4 654.8 770.3 655.8 772C656.7 773.8 659 777.1 660.1 777.4C661.2 777.7 663.3 774 664.4 774.2C665.5 774.3 667.6 777.6 668.7 778.5C669.8 779.4 672 781.2 673 781.7C674.1 782.3 676.4 783.5 677.3 782.8C678.3 782.1 679.8 776.5 680.6 775.9C681.4 775.3 682.9 777.6 683.8 778.1C684.8 778.5 687.2 778.4 688.1 779.6C689.1 780.7 690.6 783.5 691.4 787.1C692.1 790.8 693.6 802.8 694.2 808.7C694.7 814.6 695.1 830 695.7 834.6C696.3 839.3 698.1 845.3 698.9 845.8C699.7 846.4 701.4 842.2 702.2 838.9C703 835.6 704.6 824.9 705.4 819.5C706.2 814.1 707.8 801 708.6 795.8C709.5 790.5 711.4 779.2 712.3 777.4C713.3 775.7 715.2 781.7 716.2 781.7C717.2 781.7 719.4 778.8 720.5 777.4C721.6 776.1 723.8 773.1 724.8 770.9C725.9 768.8 728.2 759.7 729.1 760.1C730.1 760.6 731.6 770.3 732.4 774.2C733.2 778.1 734.7 788.6 735.6 791.4C736.6 794.3 738.7 795.9 739.9 796.8C741.2 797.8 744.1 799.4 745.3 799C746.6 798.6 748.6 794.5 749.7 793.6C750.7 792.7 752.8 792.1 754 791.4C755.1 790.8 757.9 788.2 758.9 788.2C760 788.2 761.6 790.7 762.6 791.4C763.6 792.2 765.8 794.8 766.9 794.3C768 793.7 770 789.8 771.2 787.1C772.5 784.5 775.6 775.1 776.6 773.1C777.7 771.1 779.1 772.2 779.9 770.9C780.7 769.7 782.2 765 783.1 763.4C784.1 761.8 786.2 758.3 787.4 758C788.6 757.7 791.6 759.7 792.8 761.2C794 762.7 796.2 766.9 797.1 769.9C798.1 772.8 799.6 780.4 800.4 785C801.1 789.6 802.5 803.3 803.2 806.6C804 809.8 805.6 808.4 806.5 810.9C807.4 813.4 809.3 824.7 810.4 826.4C811.4 828.2 814 825.6 815.1 824.9C816.2 824.2 818.3 821.5 819.4 820.6C820.5 819.6 822.8 818 823.7 817.3C824.7 816.7 826 816.4 827 815.2C827.9 814 830.4 809.1 831.3 807.6C832.2 806.2 833.6 803.7 834.5 803.3C835.5 802.9 837.8 803.3 838.9 804.4C839.9 805.5 842.2 810.8 843.2 812C844.1 813.1 845.3 813.7 846.4 813.5C847.5 813.2 850.5 810.9 851.8 809.8C853.1 808.7 855.5 805.1 856.6 804.4C857.6 803.7 859.4 804.7 860.4 804.4C861.5 804.1 863.4 802.6 864.8 801.8C866.1 801 869.7 797.6 871.2 797.9C872.8 798.2 875.9 805.1 877.3 804.4C878.6 803.7 880.9 794.5 882 792.5C883.2 790.5 885 788.8 886.3 788.2C887.7 787.6 891.3 787 892.8 787.6C894.3 788.1 896.9 791.8 898.2 792.5C899.6 793.2 902.5 791.1 903.6 793.2C904.7 795.2 906 806.4 906.8 808.7C907.7 811 909.3 812.1 910.1 811.3C910.9 810.5 912.4 805 913.3 802.2C914.3 799.5 916.7 791.4 917.6 789.3C918.6 787.1 920.1 785.4 920.9 785C921.7 784.6 923.2 785 924.1 786.1C925 787.1 926.8 793.3 927.8 793.2C928.7 793 930.9 786.3 931.7 785C932.5 783.6 933.4 781.8 934.3 782.4C935.1 782.9 937.2 786.8 938.1 789.3C939 791.8 940.6 799.1 941.4 802.2C942.2 805.3 943.7 812.8 944.6 814.1C945.6 815.5 947.9 814.2 948.9 813C950 811.8 952.2 805.5 953.2 804.4C954.3 803.3 956.4 804.9 957.6 804.4C958.8 803.9 961.7 801 963 800.1C964.2 799.1 966.2 799 967.3 796.8C968.4 794.7 970.4 785 971.6 782.8C972.8 780.7 975.8 780.7 977 779.6C978.2 778.5 980.3 775.6 981.3 774.2C982.3 772.7 984.2 768.4 985.2 768.1C986.1 767.9 987.7 772.7 988.9 772C990 771.3 993.2 763.7 994.3 762.3C995.3 761 996.4 762.8 997.5 761.2C998.6 759.6 1001.7 751.4 1002.9 749.4C1004.1 747.3 1005.9 745.8 1007.2 745C1008.6 744.2 1012.3 744.1 1013.7 742.9C1015 741.7 1017.1 736.8 1018 735.3C1018.9 733.8 1019.8 730.5 1020.6 731C1021.4 731.5 1023.3 737.6 1024.5 739.6C1025.6 741.7 1028.5 744.8 1029.9 747.2C1031.2 749.6 1034.1 756.9 1035.3 759.1C1036.5 761.2 1038.4 764.1 1039.6 764.5C1040.8 764.9 1043.9 762.2 1045 762.3C1046.1 762.4 1047.6 765 1048.2 765.5C1048.8 766.1 1049.4 765.1 1050 766.6C1050.6 768.1 1052.3 775.4 1053.2 777.4C1054.2 779.4 1056.5 781.3 1057.6 782.8C1058.6 784.3 1061.1 787.1 1061.9 789.3C1062.7 791.4 1063.5 797.9 1064 800.1C1064.6 802.2 1065.5 806.6 1066.2 806.6C1066.9 806.5 1068.5 800.4 1069.4 799.6C1070.4 798.9 1072.7 800.3 1073.7 800.5C1074.8 800.7 1077 800.7 1078.1 801.2C1079.1 801.6 1081.1 804.8 1081.9 804.4C1082.8 804 1083.9 799.9 1084.5 797.9C1085.1 795.9 1086.1 789.6 1086.7 788.2C1087.3 786.8 1088.6 786.3 1089.3 786.7C1090 787 1091.5 790.7 1092.1 791C1092.7 791.3 1093.4 789.2 1094.2 789.3C1095.1 789.3 1097.6 791.6 1098.6 791.4C1099.5 791.3 1101 788.4 1101.8 788.2C1102.6 788 1104.2 790.3 1105 789.7C1105.8 789.2 1107.4 784.6 1108.3 783.9C1109.2 783.2 1111.4 787 1112.2 783.9C1112.9 780.8 1113.6 765.1 1114.3 759.1C1115 753 1117.1 740.7 1118 735.3C1118.9 729.9 1120.4 720 1121.2 715.9C1122 711.8 1123.8 704.4 1124.5 702.5C1125.1 700.6 1125.9 700.5 1126.6 700.8C1127.4 701.1 1129.2 703.4 1130.3 705.1C1131.4 706.9 1134.2 712.1 1135.3 714.8C1136.3 717.5 1137.7 723.3 1138.5 726.7C1139.3 730.1 1140.8 737.8 1141.7 741.8C1142.7 745.8 1145 755.6 1146.1 759.1C1147.1 762.6 1149.4 767.6 1150.4 769.9C1151.3 772.2 1152.7 777 1153.6 777.4C1154.5 777.8 1156.8 772 1157.9 773.1C1159 774.2 1161.2 784.4 1162.2 786.1C1163.3 787.7 1165.5 785.5 1166.6 786.7C1167.6 787.9 1169.8 794.2 1170.9 795.8C1172 797.3 1174.1 797.9 1175.2 799C1176.3 800.1 1178.4 804.8 1179.5 804.4C1180.6 804 1182.9 797.9 1183.8 795.8C1184.8 793.6 1186.3 788.5 1187.1 787.1C1187.8 785.7 1189 784.1 1189.7 784.5C1190.3 784.9 1191.6 789.4 1192.5 790.4C1193.3 791.3 1195.8 792.6 1196.8 791.9C1197.7 791.1 1199.3 785.7 1200 784.5C1200.8 783.4 1202 781.9 1202.8 782.4C1203.6 782.8 1205.5 785.3 1206.5 788.2C1207.5 791.1 1209.9 803.9 1210.8 805.5C1211.7 807.1 1213.2 800.3 1214 801.2C1214.8 802 1216.5 809.7 1217.3 812C1218.1 814.2 1219.6 819.1 1220.5 819.5C1221.5 819.9 1223.8 816 1224.8 815.2C1225.9 814.4 1228.1 813.8 1229.1 813C1230.2 812.3 1232.1 809.8 1233 809.4C1234 809 1235.7 810.4 1236.7 809.8C1237.7 809.2 1240.1 804.7 1241 804.4C1242 804.1 1243.3 807.3 1244.3 807.2C1245.2 807.1 1247.6 803.4 1248.6 803.3C1249.5 803.2 1251 805.1 1251.8 806.6C1252.6 808 1254.1 812.8 1255.1 815.2C1256 817.6 1258.3 822.7 1259.4 826C1260.4 829.2 1262.7 838.3 1263.7 841.1C1264.7 843.9 1266.6 848.2 1267.6 848.6C1268.5 849 1270.2 846.1 1271.2 844.3C1272.2 842.5 1274.7 834.9 1275.6 834.2C1276.4 833.5 1277.6 838.4 1278.4 838.5C1279.1 838.6 1280.7 834.7 1281.4 835C1282.1 835.4 1283.4 839.5 1284.2 841.1C1284.9 842.7 1286.6 846.9 1287.4 847.6C1288.2 848.2 1289.9 847.6 1290.7 846.5C1291.5 845.4 1293.1 841.8 1293.9 838.9C1294.7 836.1 1296.4 827.3 1297.1 823.8C1297.9 820.3 1299.2 813.4 1300 810.9C1300.8 808.3 1302.4 804.5 1303.2 803.3C1304 802.2 1305.7 801.3 1306.5 801.8C1307.3 802.3 1308.8 806.9 1309.7 807.6C1310.7 808.4 1313 807.5 1314 807.6C1315.1 807.8 1317.1 809.4 1318.3 808.7C1319.6 808 1322.5 803.1 1323.7 802.2C1325 801.4 1327 802.4 1328.1 801.8C1329.1 801.2 1331.4 798.6 1332.4 797.5C1333.4 796.3 1335.3 792.7 1336.3 792.5C1337.2 792.3 1338.9 795.4 1339.9 795.8C1340.9 796.2 1343.2 795.5 1344.2 795.8C1345.3 796 1347.6 798.1 1348.6 797.9C1349.5 797.8 1351.1 796 1351.8 794.7C1352.5 793.4 1353.3 788.8 1354 787.6C1354.6 786.3 1356.3 785.4 1357.2 785C1358.1 784.5 1360.6 783.2 1361.5 783.9C1362.5 784.6 1363.8 788.2 1364.8 790.4C1365.7 792.5 1368.1 797.5 1369.1 801.2C1370 804.8 1371.5 815.3 1372.3 819.5C1373.1 823.7 1374.7 831 1375.5 834.6C1376.4 838.3 1378 846.2 1378.8 848.6C1379.6 851.1 1381.2 852.7 1382 854C1382.9 855.4 1384.7 859.8 1385.7 859.4C1386.6 859 1388.7 853.6 1389.6 850.8C1390.5 848 1392 840.1 1392.8 836.8C1393.6 833.4 1395.2 826.1 1396.1 823.8C1396.9 821.5 1398.3 819.8 1399.3 818.4C1400.2 817 1402.7 812.5 1403.6 812.6C1404.5 812.7 1406.1 817.7 1406.8 819.5C1407.6 821.3 1409 827.9 1409.6 827.1C1410.3 826.3 1411.6 815.4 1412.2 813C1412.9 810.7 1414.2 808 1414.8 808.3C1415.5 808.6 1416.9 813.9 1417.6 815.2C1418.3 816.5 1419.6 818.6 1420.4 818.4C1421.2 818.3 1423.2 815.6 1424.1 814.1C1425 812.6 1426.5 808.4 1427.3 806.6C1428.2 804.7 1429.9 800.7 1430.6 799C1431.3 797.3 1432.1 793.3 1432.7 793.2C1433.4 793 1435 797.6 1436 797.9C1436.9 798.2 1439.3 796.6 1440.3 795.8C1441.3 795 1443.4 793.3 1444.2 791.4C1445 789.6 1446.2 783.1 1446.8 780.7C1447.4 778.2 1448.4 773.3 1448.9 772C1449.4 770.7 1450.1 769.5 1450.7 770.3C1451.2 771.1 1452.5 776.7 1453.2 778.5C1454 780.3 1455.7 783.5 1456.5 785C1457.3 786.5 1458.8 789.3 1459.7 790.4C1460.6 791.4 1462.8 791 1463.6 793.6C1464.4 796.2 1465.5 806 1466.2 810.9C1466.9 815.7 1468.6 827.1 1469.4 832.5C1470.2 837.9 1472 849.6 1472.7 854C1473.3 858.5 1474.2 865.9 1474.8 868.1C1475.5 870.2 1477.4 870.6 1478.1 871.3C1478.7 872 1479.6 874.8 1480.2 873.5C1480.9 872.1 1482.7 863.9 1483.5 860.5C1484.3 857.1 1485.9 848.9 1486.7 846.5C1487.5 844.1 1489.1 841.9 1489.9 841.1C1490.8 840.3 1492.6 840.6 1493.2 840C1493.8 839.4 1494.2 835.4 1494.7 836.3C1495.2 837.3 1496.7 845.1 1497.5 847.6C1498.3 850 1500.1 856.6 1500.7 856.2C1501.4 855.8 1502.3 846.4 1502.9 844.3C1503.5 842.3 1505.1 843.4 1505.8 839.8C1506.4 836.1 1507.5 821 1508.2 815.1C1508.9 809.2 1510.7 796.2 1511.3 792.5C1511.9 788.8 1512.6 786.7 1513.4 785.3C1514.1 783.9 1516.6 780.9 1517.5 781.2C1518.4 781.4 1519.7 786.4 1520.6 787.4C1521.5 788.3 1523.6 788.7 1524.7 788.8C1525.7 788.9 1527.9 787.5 1528.8 788.4C1529.7 789.2 1531.1 794.3 1531.9 795.6C1532.6 796.9 1534.2 798 1534.9 798.7C1535.7 799.3 1537.3 801 1538 800.7C1538.8 800.5 1540.4 798.8 1541.1 796.6C1541.8 794.4 1543 785.3 1543.6 783.2C1544.1 781.2 1545 779.8 1545.6 780.2C1546.2 780.5 1547.6 784.1 1548.3 786.3C1549 788.5 1550.6 797 1551.4 797.6C1552.2 798.3 1553.6 792.5 1554.5 791.5C1555.4 790.4 1557.7 790.1 1558.6 789.4C1559.5 788.8 1560.9 787 1561.7 786.3C1562.4 785.6 1564.1 783.7 1564.7 783.9C1565.4 784 1566.3 787.3 1566.8 787.4C1567.3 787.4 1568.1 784.1 1568.9 784.3C1569.6 784.4 1572.1 786.1 1573 788.4C1573.9 790.7 1575.3 798.2 1576.1 802.8C1576.8 807.4 1578.5 821 1579.1 825.4C1579.8 829.8 1580.6 835.7 1581.2 837.7C1581.8 839.7 1583.1 841.3 1583.9 841.4C1584.6 841.5 1586.5 841 1587.4 838.7C1588.2 836.5 1589.7 828.3 1590.4 823.3C1591.2 818.3 1592.8 804.6 1593.5 798.7C1594.3 792.8 1595.8 780.4 1596.6 776.1C1597.4 771.7 1599 766.8 1599.7 763.7C1600.4 760.6 1601.8 753.6 1602.4 751.4C1603 749.2 1603.9 746.4 1604.4 746.2C1605 746.1 1606.2 748.2 1606.9 750.4C1607.6 752.5 1609.2 760.9 1610 763.7C1610.7 766.5 1612.2 770.8 1613.1 773C1614 775.2 1616.1 779.6 1617.2 781.2C1618.2 782.8 1620.2 785.5 1621.3 785.9C1622.3 786.3 1624.5 784.2 1625.4 784.3C1626.3 784.3 1628.1 786.1 1628.5 786.3" stroke="#5b7fc0" stroke-width="0.9" stroke-linejoin="round"/>
<path d="M140.8 741.2L240.3 726.3" stroke="#5fa83a" stroke-width="2"/>
<path d="M157.6 887.1L453.2 861.6" stroke="#5fa83a" stroke-width="2"/>
<path d="M558.6 832L693.1 856.2" stroke="#f57a4c" stroke-width="2"/>
<path d="M808 842.2L954.1 825.5" stroke="#5fa83a" stroke-width="2"/>
<path d="M1358.7 776.3L1448.3 755.2" stroke="#f57a4c" stroke-width="2"/>
</g>
</svg>
<div class="abs" style="left:1094px;top:216px;font-size:9.500px;letter-spacing:.5px;line-height:12px;color:#3a7ca5">149.955</div>
<svg class="ic" style="left:1136px;top:217px" width="20" height="9" viewBox="0 0 20 9"><path d="M0 4.500h13" stroke="#2e78a6" stroke-width="1"/><path d="M11.500 1.500l7 3-7 3z" fill="#2e78a6"/></svg>
<div class="abs" style="left:581px;top:467px;font-size:9.500px;letter-spacing:.5px;line-height:12px;color:#3a7ca5">145.481</div>
<svg class="ic" style="left:560px;top:468px" width="20" height="9" viewBox="0 0 20 9"><path d="M7 4.500h11" stroke="#2e78a6" stroke-width="1"/><path d="M8.500 1.500l-7 3 7 3z" fill="#2e78a6"/></svg>
<svg class="ic" style="left:55px;top:611px" width="15" height="15" viewBox="0 0 15 15"><path d="M7.500 1.500l6.500 12h-13z" fill="#d9561e" stroke="#d9561e" stroke-width="1" stroke-linejoin="round"/><path d="M7.500 5.500v4.500" stroke="#fff" stroke-width="1.500"/><circle cx="7.500" cy="11.800" r=".9" fill="#fff"/></svg>
<div class="abs" style="left:56px;top:644px;width:17px;height:17px;background:#9caab8;border-radius:4px;font-size:10px;line-height:18px;text-align:center;color:#111">4</div>
<div class="abs" style="left:729px;top:119px;width:30px;height:11px;background:#2e78a6;color:#fff;font-size:9px;line-height:11px;text-align:center">1.2M</div>
<div class="abs" style="left:762px;top:119px;width:30px;height:11px;background:#2e78a6;color:#fff;font-size:9px;line-height:11px;text-align:center">1.2M</div>
<div class="abs" style="left:661px;top:129px;width:98px;height:19px;border:1px solid #2e78a6;border-radius:4px 0 4px 4px;background:#fbfcfd"></div>
<div class="abs" style="left:762px;top:129px;width:98px;height:19px;border:1px solid #2e78a6;border-radius:0 4px 4px 4px;background:#fbfcfd"></div>
<div class="abs" style="left:675px;top:130px;width:1px;height:17px;background:#2e78a6"></div><div class="abs" style="left:845px;top:130px;width:1px;height:17px;background:#2e78a6"></div>
<svg class="ic" style="left:666px;top:133px" width="7" height="11" viewBox="0 0 7 11" fill="#333" shape-rendering="crispEdges"><g><rect x="0" y="0" width="1" height="1"/><rect x="0" y="2" width="1" height="1"/><rect x="0" y="4" width="1" height="1"/><rect x="0" y="6" width="1" height="1"/><rect x="0" y="8" width="1" height="1"/><rect x="0" y="10" width="1" height="1"/><rect x="2" y="0" width="1" height="1"/><rect x="2" y="2" width="1" height="1"/><rect x="2" y="4" width="1" height="1"/><rect x="2" y="6" width="1" height="1"/><rect x="2" y="8" width="1" height="1"/><rect x="2" y="10" width="1" height="1"/><rect x="4" y="0" width="1" height="1"/><rect x="4" y="2" width="1" height="1"/><rect x="4" y="4" width="1" height="1"/><rect x="4" y="6" width="1" height="1"/><rect x="4" y="8" width="1" height="1"/><rect x="4" y="10" width="1" height="1"/><rect x="6" y="0" width="1" height="1"/><rect x="6" y="2" width="1" height="1"/><rect x="6" y="4" width="1" height="1"/><rect x="6" y="6" width="1" height="1"/><rect x="6" y="8" width="1" height="1"/><rect x="6" y="10" width="1" height="1"/></g></svg>
<svg class="ic" style="left:849px;top:133px" width="7" height="11" viewBox="0 0 7 11" fill="#333" shape-rendering="crispEdges"><g><rect x="0" y="0" width="1" height="1"/><rect x="0" y="2" width="1" height="1"/><rect x="0" y="4" width="1" height="1"/><rect x="0" y="6" width="1" height="1"/><rect x="0" y="8" width="1" height="1"/><rect x="0" y="10" width="1" height="1"/><rect x="2" y="0" width="1" height="1"/><rect x="2" y="2" width="1" height="1"/><rect x="2" y="4" width="1" height="1"/><rect x="2" y="6" width="1" height="1"/><rect x="2" y="8" width="1" height="1"/><rect x="2" y="10" width="1" height="1"/><rect x="4" y="0" width="1" height="1"/><rect x="4" y="2" width="1" height="1"/><rect x="4" y="4" width="1" height="1"/><rect x="4" y="6" width="1" height="1"/><rect x="4" y="8" width="1" height="1"/><rect x="4" y="10" width="1" height="1"/><rect x="6" y="0" width="1" height="1"/><rect x="6" y="2" width="1" height="1"/><rect x="6" y="4" width="1" height="1"/><rect x="6" y="6" width="1" height="1"/><rect x="6" y="8" width="1" height="1"/><rect x="6" y="10" width="1" height="1"/></g></svg>
<div class="abs" style="left:696px;top:130px;height:17px;line-height:18px;color:#3c3c3c;white-space:nowrap"><span style="font-size:10.500px;letter-spacing:.3px">151.</span><span style="font-size:15px">19</span><span style="font-size:9px">1</span></div>
<div class="abs" style="left:783px;top:130px;height:17px;line-height:18px;color:#3c3c3c;white-space:nowrap"><span style="font-size:10.500px;letter-spacing:.3px">151.</span><span style="font-size:15px">19</span><span style="font-size:9px"><span style="color:#6f90a8">5</span></span></div>
<div class="abs" style="left:749px;top:133px;width:22px;height:12px;border:1px solid #888;border-radius:2px;background:#fdfdfd;font-size:10px;font-weight:bold;line-height:10px;text-align:center;color:#111">0.4</div>
<div class="ft"></div>
<div class="abs" style="left:866px;top:60px;width:1px;height:39px;background:#7d9bb5"></div>
<svg class="ic" style="left:855px;top:71px" width="5" height="18" viewBox="0 0 5 18" fill="#8a99a6"><rect x="0" y="0" width="1" height="1"/><rect x="0" y="2" width="1" height="1"/><rect x="0" y="4" width="1" height="1"/><rect x="0" y="6" width="1" height="1"/><rect x="0" y="8" width="1" height="1"/><rect x="0" y="10" width="1" height="1"/><rect x="0" y="12" width="1" height="1"/><rect x="0" y="14" width="1" height="1"/><rect x="0" y="16" width="1" height="1"/><rect x="2" y="0" width="1" height="1"/><rect x="2" y="2" width="1" height="1"/><rect x="2" y="4" width="1" height="1"/><rect x="2" y="6" width="1" height="1"/><rect x="2" y="8" width="1" height="1"/><rect x="2" y="10" width="1" height="1"/><rect x="2" y="12" width="1" height="1"/><rect x="2" y="14" width="1" height="1"/><rect x="2" y="16" width="1" height="1"/><rect x="4" y="0" width="1" height="1"/><rect x="4" y="2" width="1" height="1"/><rect x="4" y="4" width="1" height="1"/><rect x="4" y="6" width="1" height="1"/><rect x="4" y="8" width="1" height="1"/><rect x="4" y="10" width="1" height="1"/><rect x="4" y="12" width="1" height="1"/><rect x="4" y="14" width="1" height="1"/><rect x="4" y="16" width="1" height="1"/></svg>
<div class="abs" style="left:928px;top:66px;width:29px;height:29px;background:#cadbe8;border-radius:1px"></div>
<div class="ftb" style="left:881.5px">T70</div>
<div class="ftb" style="left:910.5px">M5</div>
<div class="ftb" style="left:942.5px;top:74px">M15</div>
<div class="ftb" style="left:971.0px">H1</div>
<div class="ftb" style="left:1001.0px">H4</div>
<div class="ftb" style="left:1030.5px">W1</div>
<div class="ftb" style="left:1061.0px">MN1</div>
<svg class="ic" style="left:1080.6px;top:67.9px;color:#444;width:22.8px;height:22.8px" width="24" height="24" viewBox="0 0 24 24" fill="none" stroke="currentColor" stroke-width="1.1" stroke-linecap="round" stroke-linejoin="round"><path d="M12 5v14M9 8l3-3 3 3M9 16l3 3 3-3" stroke="#777"/></svg>
<svg class="ic" style="left:1110.1px;top:67.9px;color:#444;width:22.8px;height:22.8px" width="24" height="24" viewBox="0 0 24 24" fill="none" stroke="currentColor" stroke-width="1.1" stroke-linecap="round" stroke-linejoin="round"><path d="M5 12h14M8 9l-3 3 3 3M16 9l3 3-3 3" stroke="#777"/></svg>
<svg class="ic" style="left:1139.6px;top:67.9px;color:#444;width:22.8px;height:22.8px" width="24" height="24" viewBox="0 0 24 24" fill="none" stroke="currentColor" stroke-width="1.1" stroke-linecap="round" stroke-linejoin="round"><path d="M5 16.500l7-8.500 7 8.500" stroke-width="1.400"/><circle cx="5" cy="16.500" r=".9" fill="currentColor"/><circle cx="19" cy="16.500" r=".9" fill="currentColor"/><circle cx="12" cy="8" r=".9" fill="currentColor"/></svg>
<svg class="ic" style="left:1170.1px;top:67.9px;color:#444;width:22.8px;height:22.8px" width="24" height="24" viewBox="0 0 24 24" fill="none" stroke="currentColor" stroke-width="1.1" stroke-linecap="round" stroke-linejoin="round"><path d="M6 18.500l12-12" stroke-width="1.400"/><circle cx="6" cy="18.500" r=".9" fill="currentColor"/><circle cx="18" cy="6.500" r=".9" fill="currentColor"/></svg>
<svg class="ic" style="left:1199.6px;top:67.9px;color:#444;width:22.8px;height:22.8px" width="24" height="24" viewBox="0 0 24 24" fill="none" stroke="currentColor" stroke-width="1.1" stroke-linecap="round" stroke-linejoin="round"><rect x="6.500" y="8.500" width="11" height="7.500" rx=".8" stroke="#777"/><path d="M12 6v2.500M12 16v2.500" stroke="#777"/></svg>
<svg class="ic" style="left:1230.1px;top:67.9px;color:#444;width:22.8px;height:22.8px" width="24" height="24" viewBox="0 0 24 24" fill="none" stroke="currentColor" stroke-width="1.1" stroke-linecap="round" stroke-linejoin="round"><path d="M5.500 6h13M5.500 10h8M5.500 14h11M5.500 18h8" stroke-width="1.100" stroke="#777"/></svg>
<svg class="ic" style="left:1260.1px;top:67.9px;color:#444;width:22.8px;height:22.8px" width="24" height="24" viewBox="0 0 24 24" fill="none" stroke="currentColor" stroke-width="1.1" stroke-linecap="round" stroke-linejoin="round"><path d="M6 8v-2.500h12v2.500M12 5.500v13M9.500 18.500h5" stroke="#777"/></svg>
<svg class="ic" style="left:1289.6px;top:67.9px;color:#444;width:22.8px;height:22.8px" width="24" height="24" viewBox="0 0 24 24" fill="none" stroke="currentColor" stroke-width="1.1" stroke-linecap="round" stroke-linejoin="round"><path d="M4.500 3.500h15M4.500 20.500h15" /><path d="M12 7v10M9.500 9.500l2.500-2.500 2.500 2.500M9.500 14.500l2.500 2.500 2.500-2.500"/></svg>
<svg class="ic" style="left:1319.6px;top:67.9px;color:#444;width:22.8px;height:22.8px" width="24" height="24" viewBox="0 0 24 24" fill="none" stroke="currentColor" stroke-width="1.1" stroke-linecap="round" stroke-linejoin="round"><path d="M6 18.500l.8-3.800 8.700-8.700 3 3-8.700 8.700zM13.500 8l3 3"/><path d="M6 18.500l.8-3.800 3 3z" fill="currentColor"/></svg>
<svg class="ic" style="left:1350.1px;top:67.9px;color:#444;width:22.8px;height:22.8px" width="24" height="24" viewBox="0 0 24 24" fill="none" stroke="currentColor" stroke-width="1.1" stroke-linecap="round" stroke-linejoin="round"><path d="M5 6h14M5 12h14M5 18h14" stroke="#666"/></svg>
<svg class="ic" style="left:1380.1px;top:67.9px;color:#444;width:22.8px;height:22.8px" width="24" height="24" viewBox="0 0 24 24" fill="none" stroke="currentColor" stroke-width="1.1" stroke-linecap="round" stroke-linejoin="round"><path d="M4.500 13h15" stroke="#888"/><path d="M6 13l5 5 7-10" stroke="#888" stroke-width="1"/></svg>
<svg class="ic" style="left:1409.6px;top:67.9px;color:#444;width:22.8px;height:22.8px" width="24" height="24" viewBox="0 0 24 24" fill="none" stroke="currentColor" stroke-width="1.1" stroke-linecap="round" stroke-linejoin="round"><path d="M5 15l13-6.500M5 18l13-6.500M5 12l13-6.500" stroke-width="1"/><circle cx="18.300" cy="5.400" r=".6" fill="currentColor"/><circle cx="5" cy="15" r=".6" fill="currentColor"/></svg>
<svg class="ic" style="left:1439.6px;top:67.9px;color:#444;width:22.8px;height:22.8px" width="24" height="24" viewBox="0 0 24 24" fill="none" stroke="currentColor" stroke-width="1.1" stroke-linecap="round" stroke-linejoin="round"><path d="M5.600 17.700l5.100-7.300 4.400 6.300 4.400-6.800" stroke-width="1.050"/><circle cx="5.600" cy="17.700" r=".65" fill="currentColor"/><circle cx="10.700" cy="10.400" r=".65" fill="currentColor"/><circle cx="15.100" cy="16.700" r=".65" fill="currentColor"/><circle cx="19.500" cy="9.900" r=".65" fill="currentColor"/><text x="5" y="10.800" font-size="6" fill="#555" stroke="none" font-family="DejaVu Sans Condensed,Liberation Sans,sans-serif">1</text><text x="12.600" y="10.300" font-size="6" fill="#555" stroke="none" font-family="DejaVu Sans Condensed,Liberation Sans,sans-serif">5</text></svg>
<svg class="ic" style="left:1469.6px;top:67.9px;color:#444;width:22.8px;height:22.8px" width="24" height="24" viewBox="0 0 24 24" fill="none" stroke="currentColor" stroke-width="1.1" stroke-linecap="round" stroke-linejoin="round"><path d="M5.600 17.700l5.100-7.300 4.400 6.300 4.400-6.800" stroke-width="1.050"/><circle cx="5.600" cy="17.700" r=".65" fill="currentColor"/><circle cx="10.700" cy="10.400" r=".65" fill="currentColor"/><circle cx="15.100" cy="16.700" r=".65" fill="currentColor"/><circle cx="19.500" cy="9.900" r=".65" fill="currentColor"/><text x="5" y="10.800" font-size="6" fill="#555" stroke="none" font-family="DejaVu Sans Condensed,Liberation Sans,sans-serif">A</text><text x="12.600" y="10.300" font-size="6" fill="#555" stroke="none" font-family="DejaVu Sans Condensed,Liberation Sans,sans-serif">E</text></svg>
<svg class="ic" style="left:1499.6px;top:67.9px;color:#444;width:22.8px;height:22.8px" width="24" height="24" viewBox="0 0 24 24" fill="none" stroke="currentColor" stroke-width="1.1" stroke-linecap="round" stroke-linejoin="round"><path d="M5.600 17.700l5.100-7.300 4.400 6.300 4.400-6.800" stroke-width="1.050"/><circle cx="5.600" cy="17.700" r=".65" fill="currentColor"/><circle cx="10.700" cy="10.400" r=".65" fill="currentColor"/><circle cx="15.100" cy="16.700" r=".65" fill="currentColor"/><circle cx="19.500" cy="9.900" r=".65" fill="currentColor"/><text x="5" y="10.800" font-size="6" fill="#555" stroke="none" font-family="DejaVu Sans Condensed,Liberation Sans,sans-serif">W</text><text x="12.600" y="10.300" font-size="6" fill="#555" stroke="none" font-family="DejaVu Sans Condensed,Liberation Sans,sans-serif">Z</text></svg>
<svg class="ic" style="left:1529.6px;top:67.9px;color:#444;width:22.8px;height:22.8px" width="24" height="24" viewBox="0 0 24 24" fill="none" stroke="currentColor" stroke-width="1.1" stroke-linecap="round" stroke-linejoin="round"><path d="M5.600 17.700l5.100-7.300 4.400 6.300 4.400-6.800" stroke-width="1.050"/><circle cx="5.600" cy="17.700" r=".65" fill="currentColor"/><circle cx="10.700" cy="10.400" r=".65" fill="currentColor"/><circle cx="15.100" cy="16.700" r=".65" fill="currentColor"/><circle cx="19.500" cy="9.900" r=".65" fill="currentColor"/><text x="5" y="10.800" font-size="6" fill="#555" stroke="none" font-family="DejaVu Sans Condensed,Liberation Sans,sans-serif">A</text><text x="12.600" y="10.300" font-size="6" fill="#555" stroke="none" font-family="DejaVu Sans Condensed,Liberation Sans,sans-serif">C</text></svg>
<svg class="ic" style="left:1559.6px;top:67.9px;color:#444;width:22.8px;height:22.8px" width="24" height="24" viewBox="0 0 24 24" fill="none" stroke="currentColor" stroke-width="1.1" stroke-linecap="round" stroke-linejoin="round"><path d="M5.600 17.700l5.100-7.300 4.400 6.300 4.400-6.800" stroke-width="1.050"/><circle cx="5.600" cy="17.700" r=".65" fill="currentColor"/><circle cx="10.700" cy="10.400" r=".65" fill="currentColor"/><circle cx="15.100" cy="16.700" r=".65" fill="currentColor"/><circle cx="19.500" cy="9.900" r=".65" fill="currentColor"/><text x="5" y="10.800" font-size="6" fill="#555" stroke="none" font-family="DejaVu Sans Condensed,Liberation Sans,sans-serif">W</text><text x="12.600" y="10.300" font-size="6" fill="#555" stroke="none" font-family="DejaVu Sans Condensed,Liberation Sans,sans-serif">Y</text></svg>
<svg class="ic" style="left:1589.6px;top:67.9px;color:#444;width:22.8px;height:22.8px" width="24" height="24" viewBox="0 0 24 24" fill="none" stroke="currentColor" stroke-width="1.1" stroke-linecap="round" stroke-linejoin="round"><path d="M5 18.500l11-11.500M9 19l11-11.500"/></svg>
<svg class="ic" style="left:1619.6px;top:67.9px;color:#444;width:22.8px;height:22.8px" width="24" height="24" viewBox="0 0 24 24" fill="none" stroke="currentColor" stroke-width="1.1" stroke-linecap="round" stroke-linejoin="round"><circle cx="12" cy="12" r="5.800"/></svg>
</body></html>
